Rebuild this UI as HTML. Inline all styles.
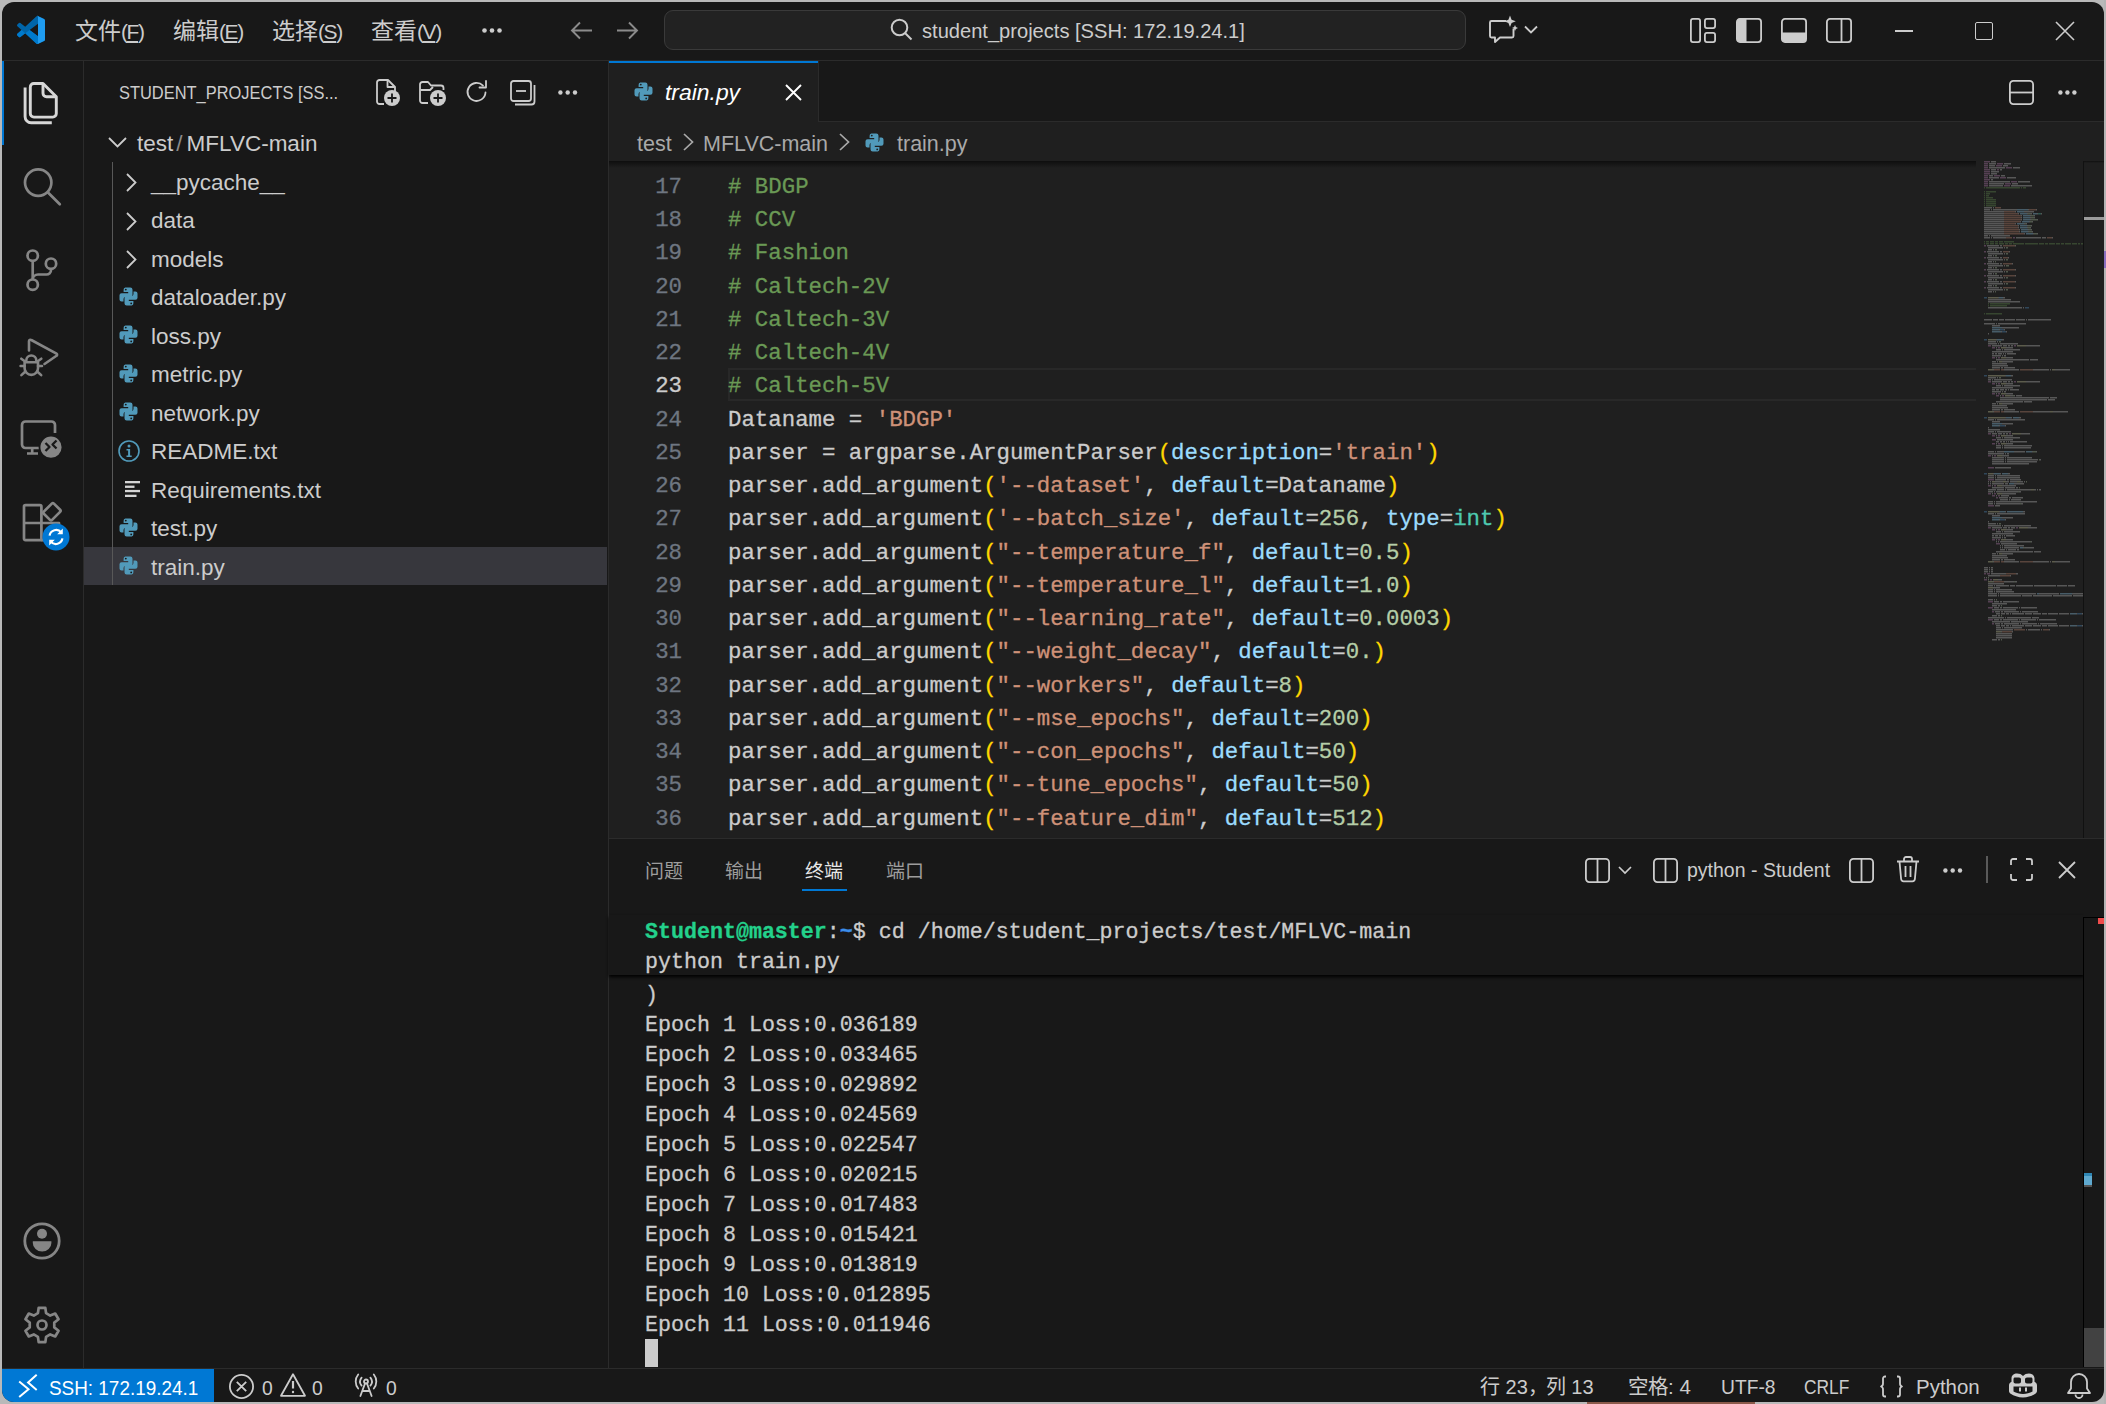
<!DOCTYPE html>
<html lang="zh-CN">
<head>
<meta charset="utf-8">
<style>
html,body{margin:0;padding:0;width:2106px;height:1404px;overflow:hidden;background:#b9b9b9;}
body{font-family:"Liberation Sans",sans-serif;color:#cccccc;position:relative;}
.a{position:absolute;}
#win{position:absolute;left:2px;top:2px;width:2102px;height:1400px;background:#181818;border-radius:12px;overflow:hidden;}
.mono{font-family:"Liberation Mono",monospace;-webkit-text-stroke:0.3px currentColor;}
.ui{font-family:"Liberation Sans",sans-serif;white-space:nowrap;}
svg{position:absolute;overflow:visible;}
.ln{position:absolute;left:0;width:682px;text-align:right;color:#6e7681;}
.cl{position:absolute;left:728px;white-space:pre;color:#cccccc;}
.cm{color:#6a9955}.st{color:#ce9178}.pr{color:#9cdcfe}.nu{color:#b5cea8}.ty{color:#4ec9b0}.br{color:#ffd700}
.tl{position:absolute;left:645px;white-space:pre;color:#cccccc;}
</style>
</head>
<body>
<div id="win"></div>
<!-- coordinates below are page absolute -->
<!-- title bar border -->
<div class="a" style="left:2px;top:60px;width:2102px;height:1px;background:#2b2b2b"></div>
<!-- activity bar border -->
<div class="a" style="left:83px;top:61px;width:1px;height:1307px;background:#2b2b2b"></div>
<!-- activity active indicator -->
<div class="a" style="left:2px;top:61px;width:1.5px;height:84px;background:#0078d4"></div>
<!-- sidebar border -->
<div class="a" style="left:608px;top:61px;width:1px;height:1307px;background:#2b2b2b"></div>
<!-- editor area -->
<div class="a" style="left:609px;top:122px;width:1495px;height:716px;background:#1f1f1f"></div>
<div class="a" style="left:609px;top:161px;width:1367px;height:7px;background:linear-gradient(rgba(0,0,0,0.55),rgba(0,0,0,0))"></div>
<div class="a" style="left:2083px;top:161px;width:21px;height:2px;background:linear-gradient(rgba(0,0,0,0.5),rgba(0,0,0,0))"></div>
<!-- tab bar bottom border -->
<div class="a" style="left:608px;top:121px;width:1496px;height:1px;background:#2b2b2b"></div>
<!-- active tab -->
<div class="a" style="left:609px;top:61px;width:210px;height:61px;background:#1f1f1f;border-right:1px solid #2b2b2b;box-sizing:border-box"></div>
<div class="a" style="left:609px;top:61px;width:209px;height:2px;background:#0078d4"></div>
<!-- panel top border -->
<div class="a" style="left:608px;top:838px;width:1496px;height:1px;background:#2b2b2b"></div>
<!-- status bar -->
<div class="a" style="left:2px;top:1368px;width:2102px;height:1px;background:#2b2b2b"></div>
<div class="a" style="left:2px;top:1369px;width:212px;height:33px;background:#0078d4;border-bottom-left-radius:12px"></div>

<!-- EDITOR CODE -->
<div class="a" style="left:728px;top:368px;width:1248px;height:33px;border:2px solid #282828;border-right:none;box-sizing:border-box"></div>
<div id="code" class="a mono" style="left:0;top:0;width:1983px;height:838px;overflow:hidden;font-size:22.38px;line-height:33.25px;">
<div class="ln" style="top:170.90px;color:#6e7681">17</div><div class="cl" style="top:170.90px"><span class="cm"># BDGP</span></div>
<div class="ln" style="top:204.15px;color:#6e7681">18</div><div class="cl" style="top:204.15px"><span class="cm"># CCV</span></div>
<div class="ln" style="top:237.40px;color:#6e7681">19</div><div class="cl" style="top:237.40px"><span class="cm"># Fashion</span></div>
<div class="ln" style="top:270.65px;color:#6e7681">20</div><div class="cl" style="top:270.65px"><span class="cm"># Caltech-2V</span></div>
<div class="ln" style="top:303.90px;color:#6e7681">21</div><div class="cl" style="top:303.90px"><span class="cm"># Caltech-3V</span></div>
<div class="ln" style="top:337.15px;color:#6e7681">22</div><div class="cl" style="top:337.15px"><span class="cm"># Caltech-4V</span></div>
<div class="ln" style="top:370.40px;color:#cccccc">23</div><div class="cl" style="top:370.40px"><span class="cm"># Caltech-5V</span></div>
<div class="ln" style="top:403.65px;color:#6e7681">24</div><div class="cl" style="top:403.65px">Dataname = <span class="st">'BDGP'</span></div>
<div class="ln" style="top:436.90px;color:#6e7681">25</div><div class="cl" style="top:436.90px">parser = argparse.ArgumentParser<span class="br">(</span><span class="pr">description</span>=<span class="st">'train'</span><span class="br">)</span></div>
<div class="ln" style="top:470.15px;color:#6e7681">26</div><div class="cl" style="top:470.15px">parser.add_argument<span class="br">(</span><span class="st">'--dataset'</span>, <span class="pr">default</span>=Dataname<span class="br">)</span></div>
<div class="ln" style="top:503.40px;color:#6e7681">27</div><div class="cl" style="top:503.40px">parser.add_argument<span class="br">(</span><span class="st">'--batch_size'</span>, <span class="pr">default</span>=<span class="nu">256</span>, <span class="pr">type</span>=<span class="ty">int</span><span class="br">)</span></div>
<div class="ln" style="top:536.65px;color:#6e7681">28</div><div class="cl" style="top:536.65px">parser.add_argument<span class="br">(</span><span class="st">"--temperature_f"</span>, <span class="pr">default</span>=<span class="nu">0.5</span><span class="br">)</span></div>
<div class="ln" style="top:569.90px;color:#6e7681">29</div><div class="cl" style="top:569.90px">parser.add_argument<span class="br">(</span><span class="st">"--temperature_l"</span>, <span class="pr">default</span>=<span class="nu">1.0</span><span class="br">)</span></div>
<div class="ln" style="top:603.15px;color:#6e7681">30</div><div class="cl" style="top:603.15px">parser.add_argument<span class="br">(</span><span class="st">"--learning_rate"</span>, <span class="pr">default</span>=<span class="nu">0.0003</span><span class="br">)</span></div>
<div class="ln" style="top:636.40px;color:#6e7681">31</div><div class="cl" style="top:636.40px">parser.add_argument<span class="br">(</span><span class="st">"--weight_decay"</span>, <span class="pr">default</span>=<span class="nu">0.</span><span class="br">)</span></div>
<div class="ln" style="top:669.65px;color:#6e7681">32</div><div class="cl" style="top:669.65px">parser.add_argument<span class="br">(</span><span class="st">"--workers"</span>, <span class="pr">default</span>=<span class="nu">8</span><span class="br">)</span></div>
<div class="ln" style="top:702.90px;color:#6e7681">33</div><div class="cl" style="top:702.90px">parser.add_argument<span class="br">(</span><span class="st">"--mse_epochs"</span>, <span class="pr">default</span>=<span class="nu">200</span><span class="br">)</span></div>
<div class="ln" style="top:736.15px;color:#6e7681">34</div><div class="cl" style="top:736.15px">parser.add_argument<span class="br">(</span><span class="st">"--con_epochs"</span>, <span class="pr">default</span>=<span class="nu">50</span><span class="br">)</span></div>
<div class="ln" style="top:769.40px;color:#6e7681">35</div><div class="cl" style="top:769.40px">parser.add_argument<span class="br">(</span><span class="st">"--tune_epochs"</span>, <span class="pr">default</span>=<span class="nu">50</span><span class="br">)</span></div>
<div class="ln" style="top:802.65px;color:#6e7681">36</div><div class="cl" style="top:802.65px">parser.add_argument<span class="br">(</span><span class="st">"--feature_dim"</span>, <span class="pr">default</span>=<span class="nu">512</span><span class="br">)</span></div>
</div>
<!-- TERMINAL -->
<div id="term" class="a mono" style="left:0;top:0;width:2084px;height:1367px;overflow:hidden;font-size:21.65px;line-height:30px;">
<div class="tl" style="top:981.2px">)</div>
<div class="tl" style="top:1011.2px">Epoch 1 Loss:0.036189</div>
<div class="tl" style="top:1041.2px">Epoch 2 Loss:0.033465</div>
<div class="tl" style="top:1071.2px">Epoch 3 Loss:0.029892</div>
<div class="tl" style="top:1101.2px">Epoch 4 Loss:0.024569</div>
<div class="tl" style="top:1131.2px">Epoch 5 Loss:0.022547</div>
<div class="tl" style="top:1161.2px">Epoch 6 Loss:0.020215</div>
<div class="tl" style="top:1191.2px">Epoch 7 Loss:0.017483</div>
<div class="tl" style="top:1221.2px">Epoch 8 Loss:0.015421</div>
<div class="tl" style="top:1251.2px">Epoch 9 Loss:0.013819</div>
<div class="tl" style="top:1281.2px">Epoch 10 Loss:0.012895</div>
<div class="tl" style="top:1311.2px">Epoch 11 Loss:0.011946</div>
<div class="a" style="left:645px;top:1339px;width:13px;height:28px;background:#cccccc"></div>
<div class="a" style="left:609px;top:915px;width:1475px;height:60px;background:#181818;box-shadow:0 2px 3px #000"></div>
<div class="tl" style="top:918.2px"><b style="color:#23d18b">Student@master</b>:<b style="color:#3b8eea">~</b>$ cd /home/student_projects/test/MFLVC-main</div>
<div class="tl" style="top:948.2px">python train.py</div>
</div>
<!-- TITLE BAR -->
<svg style="left:17px;top:16px" width="28" height="28" viewBox="0 0 100 100">
<path fill="#0065a9" d="M96.46 10.8 75.86.87a6.23 6.23 0 0 0-7.1 1.2L29.33 38.04 12.15 25.01a4.16 4.16 0 0 0-5.32.24L1.34 30.25a4.17 4.17 0 0 0 0 6.16L16.24 50 1.34 63.6a4.17 4.17 0 0 0 0 6.15l5.5 5a4.16 4.16 0 0 0 5.31.24l17.18-13.04 39.43 35.97a6.23 6.23 0 0 0 7.1 1.2l20.6-9.92a6.25 6.25 0 0 0 3.54-5.63V16.43a6.25 6.25 0 0 0-3.54-5.63ZM75.02 72.7 45.11 50l29.91-22.7v45.4Z"/>
<path fill="#007acc" d="M1.34 63.6 16.24 50l13.09 11.96-17.18 13.04a4.16 4.16 0 0 1-5.31-.24l-5.5-5a4.17 4.17 0 0 1 0-6.15ZM29.33 61.96 45.11 50l29.91 22.7V95.93a6.23 6.23 0 0 1-6.26 2.6Z"/>
<path fill="#1f9cf0" d="M75.86.87 96.46 10.8a6.25 6.25 0 0 1 3.54 5.63v67.14a6.25 6.25 0 0 1-3.54 5.63l-20.6 9.92a6.23 6.23 0 0 1-7.1-1.2c2.3 2.3 6.26.67 6.26-2.6V4.07c0-3.27-3.96-4.9-6.26-2.6a6.23 6.23 0 0 1 7.1-1.2Z"/>
</svg>
<div class="a ui" style="left:75px;top:17px;font-size:23px;line-height:28px;color:#cccccc">文件<span style="font-size:21px;letter-spacing:-1.4px">(<u style="text-underline-offset:2px">F</u>)</span></div>
<div class="a ui" style="left:173px;top:17px;font-size:23px;line-height:28px;color:#cccccc">编辑<span style="font-size:21px;letter-spacing:-1.4px">(<u style="text-underline-offset:2px">E</u>)</span></div>
<div class="a ui" style="left:272px;top:17px;font-size:23px;line-height:28px;color:#cccccc">选择<span style="font-size:21px;letter-spacing:-1.4px">(<u style="text-underline-offset:2px">S</u>)</span></div>
<div class="a ui" style="left:371px;top:17px;font-size:23px;line-height:28px;color:#cccccc">查看<span style="font-size:21px;letter-spacing:-1.4px">(<u style="text-underline-offset:2px">V</u>)</span></div>
<svg style="left:482px;top:28px" width="20" height="5"><circle cx="2.5" cy="2.5" r="2.3" fill="#cccccc"/><circle cx="10" cy="2.5" r="2.3" fill="#cccccc"/><circle cx="17.5" cy="2.5" r="2.3" fill="#cccccc"/></svg>
<!-- nav arrows -->
<svg style="left:570px;top:21px" width="23" height="19" viewBox="0 0 23 19" fill="none" stroke="#8b8b8b" stroke-width="1.9"><path d="M22 9.5H2M10 1.5 2 9.5l8 8"/></svg>
<svg style="left:616px;top:21px" width="23" height="19" viewBox="0 0 23 19" fill="none" stroke="#8b8b8b" stroke-width="1.9"><path d="M1 9.5H21M13 1.5l8 8-8 8"/></svg>
<!-- command center -->
<div class="a" style="left:664px;top:10px;width:802px;height:40px;box-sizing:border-box;border:1.5px solid #3a3a3a;border-radius:9px;background:#222222"></div>
<svg style="left:890px;top:18px" width="23" height="23" viewBox="0 0 23 23" fill="none" stroke="#cccccc" stroke-width="2"><circle cx="9.5" cy="9.5" r="7.8"/><path d="M15 15l6.5 6.5"/></svg>
<div class="a ui" style="left:922px;top:17px;font-size:20.1px;line-height:28px;color:#cccccc">student_projects [SSH: 172.19.24.1]</div>
<!-- copilot -->
<svg style="left:1488px;top:15px" width="30" height="28" viewBox="0 0 30 28" fill="none" stroke="#cccccc" stroke-width="1.9" stroke-linejoin="round"><path d="M18 6H3.5C2.6 6 2 6.6 2 7.5V21c0 .9.6 1.5 1.5 1.5H7V27l5-4.5h12c.9 0 1.5-.6 1.5-1.5V14"/><path fill="#cccccc" stroke="none" d="M22 0.5l1.6 4.2 4.2 1.6-4.2 1.6L22 12.1l-1.6-4.2-4.2-1.6 4.2-1.6z"/><path fill="#cccccc" stroke="none" d="M27 10l.9 2.1 2.1.9-2.1.9-.9 2.1-.9-2.1-2.1-.9 2.1-.9z"/></svg>
<svg style="left:1524px;top:25px" width="14" height="10" viewBox="0 0 14 10" fill="none" stroke="#cccccc" stroke-width="1.8"><path d="M1 1.5l6 6 6-6"/></svg>
<!-- layout icons -->
<svg style="left:1690px;top:18px" width="26" height="25" viewBox="0 0 26 25" fill="none" stroke="#cccccc" stroke-width="1.8"><rect x="0.9" y="0.9" width="9.2" height="23.2" rx="2"/><rect x="14.9" y="0.9" width="10.2" height="9.2" rx="2"/><rect x="14.9" y="14.9" width="10.2" height="9.2" rx="2"/></svg>
<svg style="left:1736px;top:18px" width="26" height="25" viewBox="0 0 26 25" fill="none" stroke="#cccccc" stroke-width="1.8"><rect x="0.9" y="0.9" width="24.2" height="23.2" rx="3"/><path d="M1 4a3 3 0 0 1 3-3h6.5v23H4a3 3 0 0 1-3-3z" fill="#cccccc" stroke="none"/></svg>
<svg style="left:1781px;top:18px" width="26" height="25" viewBox="0 0 26 25" fill="none" stroke="#cccccc" stroke-width="1.8"><rect x="0.9" y="0.9" width="24.2" height="23.2" rx="3"/><path d="M1 14.5h24V21a3 3 0 0 1-3 3H4a3 3 0 0 1-3-3z" fill="#cccccc" stroke="none"/></svg>
<svg style="left:1826px;top:18px" width="26" height="25" viewBox="0 0 26 25" fill="none" stroke="#cccccc" stroke-width="1.8"><rect x="0.9" y="0.9" width="24.2" height="23.2" rx="3"/><path d="M15.5 1v23"/></svg>
<!-- window controls -->
<div class="a" style="left:1895px;top:30px;width:18px;height:2px;background:#cccccc"></div>
<div class="a" style="left:1975px;top:22px;width:18px;height:18px;box-sizing:border-box;border:1.6px solid #cccccc;border-radius:2px"></div>
<svg style="left:2055px;top:21px" width="20" height="20" viewBox="0 0 20 20" stroke="#cccccc" stroke-width="1.6"><path d="M1 1l18 18M19 1 1 19"/></svg>

<!-- SIDEBAR -->
<div class="a ui" style="left:119px;top:80px;font-size:19px;line-height:26px;color:#cccccc;transform-origin:0 0;transform:scaleX(0.865)">STUDENT_PROJECTS [SS...</div>
<svg style="left:376px;top:79px" width="26" height="28" viewBox="0 0 26 28" fill="none" stroke="#cccccc" stroke-width="1.8" stroke-linejoin="round"><path d="M8 25H3.5C2.1 25 1 23.9 1 22.5v-19C1 2.1 2.1 1 3.5 1H12l7 7v4"/><path d="M11.5 1.5V8h7"/><circle cx="16" cy="19" r="8" fill="#cccccc" stroke="none"/><path d="M16 14.5v9M11.5 19h9" stroke="#181818" stroke-width="1.8"/></svg>
<svg style="left:419px;top:81px" width="28" height="26" viewBox="0 0 28 26" fill="none" stroke="#cccccc" stroke-width="1.8" stroke-linejoin="round"><path d="M9 22H3.5C2.1 22 1 20.9 1 19.5v-16C1 2.1 2.1 1 3.5 1H9l3 3.5h10c1.4 0 2.5 1.1 2.5 2.5v2"/><path d="M1.5 9H11l3-3"/><circle cx="19" cy="17" r="8" fill="#cccccc" stroke="none"/><path d="M19 12.5v9M14.5 17h9" stroke="#181818" stroke-width="1.8"/></svg>
<svg style="left:466px;top:80px" width="23" height="24" viewBox="0 0 23 24" fill="none" stroke="#cccccc" stroke-width="1.8" stroke-linecap="round" stroke-linejoin="round"><path d="M19.5 12.5A9 9 0 1 1 17 5.7"/><path d="M20 1v6.5h-6.5"/></svg>
<svg style="left:510px;top:80px" width="26" height="25" viewBox="0 0 26 25" fill="none" stroke="#cccccc" stroke-width="1.8"><rect x="1" y="1" width="20" height="20" rx="2.5"/><path d="M24.5 5v16.5a3 3 0 0 1-3 3H5"/><path d="M6 11h10"/></svg>
<svg style="left:558px;top:89.5px" width="20" height="5"><circle cx="2.4" cy="2.5" r="2.2" fill="#cccccc"/><circle cx="9.7" cy="2.5" r="2.2" fill="#cccccc"/><circle cx="17" cy="2.5" r="2.2" fill="#cccccc"/></svg>
<div class="a" style="left:84px;top:547px;width:523px;height:38px;background:#37373d"></div>
<div class="a" style="left:112px;top:162px;width:1px;height:423px;background:#585858"></div>
<svg style="left:108px;top:137px" width="19" height="11" viewBox="0 0 19 11" fill="none" stroke="#cccccc" stroke-width="1.8"><path d="M1 1l8.5 8.5L18 1"/></svg>
<div class="a ui" style="left:137px;top:125.0px;font-size:22.5px;line-height:38.5px;color:#cccccc">test<span style="color:#8b8b8b;margin:0 4px 0 3px">/</span>MFLVC-main</div>
<svg style="left:126px;top:173.0px" width="11" height="19" viewBox="0 0 11 19" fill="none" stroke="#cccccc" stroke-width="1.8"><path d="M1 1l8.5 8.5L1 18"/></svg>
<div class="a ui" style="left:151px;top:163.5px;font-size:22.5px;line-height:38.5px;color:#cccccc">__pycache__</div>
<svg style="left:126px;top:211.5px" width="11" height="19" viewBox="0 0 11 19" fill="none" stroke="#cccccc" stroke-width="1.8"><path d="M1 1l8.5 8.5L1 18"/></svg>
<div class="a ui" style="left:151px;top:202.0px;font-size:22.5px;line-height:38.5px;color:#cccccc">data</div>
<svg style="left:126px;top:250.0px" width="11" height="19" viewBox="0 0 11 19" fill="none" stroke="#cccccc" stroke-width="1.8"><path d="M1 1l8.5 8.5L1 18"/></svg>
<div class="a ui" style="left:151px;top:240.5px;font-size:22.5px;line-height:38.5px;color:#cccccc">models</div>
<svg style="left:119px;top:286.8px" width="19" height="19" viewBox="0 0 19 19"><path fill="#519aba" d="M6.3 0.5h5a2.2 2.2 0 0 1 2.2 2.2v5.1a2.2 2.2 0 0 1-2.2 2.2H6.6a2.1 2.1 0 0 0-2.1 2.1v2.4H2.6A2.1 2.1 0 0 1 .5 12.4V8.3a2.1 2.1 0 0 1 2.1-2.1h6.6V5H4.6V2.7A2.2 2.2 0 0 1 6.3.5z"/><path fill="#519aba" d="M12.7 18.5h-5a2.2 2.2 0 0 1-2.2-2.2v-5.1a2.2 2.2 0 0 1 2.2-2.2h4.7a2.1 2.1 0 0 0 2.1-2.1V4.5h1.9a2.1 2.1 0 0 1 2.1 2.1v4.1a2.1 2.1 0 0 1-2.1 2.1H9.8V14h4.6v2.3a2.2 2.2 0 0 1-1.7 2.2z"/><circle cx="6.8" cy="2.6" r="0.9" fill="#181818"/><circle cx="12.2" cy="16.4" r="0.9" fill="#181818"/></svg>
<div class="a ui" style="left:151px;top:279.0px;font-size:22.5px;line-height:38.5px;color:#cccccc">dataloader.py</div>
<svg style="left:119px;top:325.3px" width="19" height="19" viewBox="0 0 19 19"><path fill="#519aba" d="M6.3 0.5h5a2.2 2.2 0 0 1 2.2 2.2v5.1a2.2 2.2 0 0 1-2.2 2.2H6.6a2.1 2.1 0 0 0-2.1 2.1v2.4H2.6A2.1 2.1 0 0 1 .5 12.4V8.3a2.1 2.1 0 0 1 2.1-2.1h6.6V5H4.6V2.7A2.2 2.2 0 0 1 6.3.5z"/><path fill="#519aba" d="M12.7 18.5h-5a2.2 2.2 0 0 1-2.2-2.2v-5.1a2.2 2.2 0 0 1 2.2-2.2h4.7a2.1 2.1 0 0 0 2.1-2.1V4.5h1.9a2.1 2.1 0 0 1 2.1 2.1v4.1a2.1 2.1 0 0 1-2.1 2.1H9.8V14h4.6v2.3a2.2 2.2 0 0 1-1.7 2.2z"/><circle cx="6.8" cy="2.6" r="0.9" fill="#181818"/><circle cx="12.2" cy="16.4" r="0.9" fill="#181818"/></svg>
<div class="a ui" style="left:151px;top:317.5px;font-size:22.5px;line-height:38.5px;color:#cccccc">loss.py</div>
<svg style="left:119px;top:363.8px" width="19" height="19" viewBox="0 0 19 19"><path fill="#519aba" d="M6.3 0.5h5a2.2 2.2 0 0 1 2.2 2.2v5.1a2.2 2.2 0 0 1-2.2 2.2H6.6a2.1 2.1 0 0 0-2.1 2.1v2.4H2.6A2.1 2.1 0 0 1 .5 12.4V8.3a2.1 2.1 0 0 1 2.1-2.1h6.6V5H4.6V2.7A2.2 2.2 0 0 1 6.3.5z"/><path fill="#519aba" d="M12.7 18.5h-5a2.2 2.2 0 0 1-2.2-2.2v-5.1a2.2 2.2 0 0 1 2.2-2.2h4.7a2.1 2.1 0 0 0 2.1-2.1V4.5h1.9a2.1 2.1 0 0 1 2.1 2.1v4.1a2.1 2.1 0 0 1-2.1 2.1H9.8V14h4.6v2.3a2.2 2.2 0 0 1-1.7 2.2z"/><circle cx="6.8" cy="2.6" r="0.9" fill="#181818"/><circle cx="12.2" cy="16.4" r="0.9" fill="#181818"/></svg>
<div class="a ui" style="left:151px;top:356.0px;font-size:22.5px;line-height:38.5px;color:#cccccc">metric.py</div>
<svg style="left:119px;top:402.3px" width="19" height="19" viewBox="0 0 19 19"><path fill="#519aba" d="M6.3 0.5h5a2.2 2.2 0 0 1 2.2 2.2v5.1a2.2 2.2 0 0 1-2.2 2.2H6.6a2.1 2.1 0 0 0-2.1 2.1v2.4H2.6A2.1 2.1 0 0 1 .5 12.4V8.3a2.1 2.1 0 0 1 2.1-2.1h6.6V5H4.6V2.7A2.2 2.2 0 0 1 6.3.5z"/><path fill="#519aba" d="M12.7 18.5h-5a2.2 2.2 0 0 1-2.2-2.2v-5.1a2.2 2.2 0 0 1 2.2-2.2h4.7a2.1 2.1 0 0 0 2.1-2.1V4.5h1.9a2.1 2.1 0 0 1 2.1 2.1v4.1a2.1 2.1 0 0 1-2.1 2.1H9.8V14h4.6v2.3a2.2 2.2 0 0 1-1.7 2.2z"/><circle cx="6.8" cy="2.6" r="0.9" fill="#181818"/><circle cx="12.2" cy="16.4" r="0.9" fill="#181818"/></svg>
<div class="a ui" style="left:151px;top:394.5px;font-size:22.5px;line-height:38.5px;color:#cccccc">network.py</div>
<svg style="left:118px;top:439.5px" width="22" height="22" viewBox="0 0 22 22"><circle cx="11" cy="11" r="10" fill="none" stroke="#519aba" stroke-width="1.6"/><circle cx="11" cy="6" r="1.5" fill="#519aba"/><path fill="#519aba" d="M8.5 9h3.6v6.6h1.6v1.4H8.5v-1.4h1.6v-5.2H8.5z"/></svg>
<div class="a ui" style="left:151px;top:433.0px;font-size:22.5px;line-height:38.5px;color:#cccccc">README.txt</div>
<svg style="left:125px;top:481px" width="16" height="16" viewBox="0 0 16 16" fill="#d4d4d4"><rect x="0" y="0" width="15" height="2.3"/><rect x="0" y="4.6" width="9.5" height="2.3"/><rect x="0" y="8.9" width="15" height="2.3"/><rect x="0" y="13.7" width="11.5" height="2.3"/></svg>
<div class="a ui" style="left:151px;top:471.5px;font-size:22.5px;line-height:38.5px;color:#cccccc">Requirements.txt</div>
<svg style="left:119px;top:517.8px" width="19" height="19" viewBox="0 0 19 19"><path fill="#519aba" d="M6.3 0.5h5a2.2 2.2 0 0 1 2.2 2.2v5.1a2.2 2.2 0 0 1-2.2 2.2H6.6a2.1 2.1 0 0 0-2.1 2.1v2.4H2.6A2.1 2.1 0 0 1 .5 12.4V8.3a2.1 2.1 0 0 1 2.1-2.1h6.6V5H4.6V2.7A2.2 2.2 0 0 1 6.3.5z"/><path fill="#519aba" d="M12.7 18.5h-5a2.2 2.2 0 0 1-2.2-2.2v-5.1a2.2 2.2 0 0 1 2.2-2.2h4.7a2.1 2.1 0 0 0 2.1-2.1V4.5h1.9a2.1 2.1 0 0 1 2.1 2.1v4.1a2.1 2.1 0 0 1-2.1 2.1H9.8V14h4.6v2.3a2.2 2.2 0 0 1-1.7 2.2z"/><circle cx="6.8" cy="2.6" r="0.9" fill="#181818"/><circle cx="12.2" cy="16.4" r="0.9" fill="#181818"/></svg>
<div class="a ui" style="left:151px;top:510.0px;font-size:22.5px;line-height:38.5px;color:#cccccc">test.py</div>
<svg style="left:119px;top:556.3px" width="19" height="19" viewBox="0 0 19 19"><path fill="#519aba" d="M6.3 0.5h5a2.2 2.2 0 0 1 2.2 2.2v5.1a2.2 2.2 0 0 1-2.2 2.2H6.6a2.1 2.1 0 0 0-2.1 2.1v2.4H2.6A2.1 2.1 0 0 1 .5 12.4V8.3a2.1 2.1 0 0 1 2.1-2.1h6.6V5H4.6V2.7A2.2 2.2 0 0 1 6.3.5z"/><path fill="#519aba" d="M12.7 18.5h-5a2.2 2.2 0 0 1-2.2-2.2v-5.1a2.2 2.2 0 0 1 2.2-2.2h4.7a2.1 2.1 0 0 0 2.1-2.1V4.5h1.9a2.1 2.1 0 0 1 2.1 2.1v4.1a2.1 2.1 0 0 1-2.1 2.1H9.8V14h4.6v2.3a2.2 2.2 0 0 1-1.7 2.2z"/><circle cx="6.8" cy="2.6" r="0.9" fill="#181818"/><circle cx="12.2" cy="16.4" r="0.9" fill="#181818"/></svg>
<div class="a ui" style="left:151px;top:548.5px;font-size:22.5px;line-height:38.5px;color:#cccccc">train.py</div>
<!-- TABS & BREADCRUMB -->
<svg style="left:634px;top:82px" width="19" height="19" viewBox="0 0 19 19"><path fill="#519aba" d="M6.3 0.5h5a2.2 2.2 0 0 1 2.2 2.2v5.1a2.2 2.2 0 0 1-2.2 2.2H6.6a2.1 2.1 0 0 0-2.1 2.1v2.4H2.6A2.1 2.1 0 0 1 .5 12.4V8.3a2.1 2.1 0 0 1 2.1-2.1h6.6V5H4.6V2.7A2.2 2.2 0 0 1 6.3.5z"/><path fill="#519aba" d="M12.7 18.5h-5a2.2 2.2 0 0 1-2.2-2.2v-5.1a2.2 2.2 0 0 1 2.2-2.2h4.7a2.1 2.1 0 0 0 2.1-2.1V4.5h1.9a2.1 2.1 0 0 1 2.1 2.1v4.1a2.1 2.1 0 0 1-2.1 2.1H9.8V14h4.6v2.3a2.2 2.2 0 0 1-1.7 2.2z"/><circle cx="6.8" cy="2.6" r="0.9" fill="#1f1f1f"/><circle cx="12.2" cy="16.4" r="0.9" fill="#1f1f1f"/></svg>
<div class="a ui" style="left:665px;top:73px;font-size:22.9px;line-height:38px;color:#ffffff;font-style:italic">train.py</div>
<svg style="left:785px;top:84px" width="17" height="17" viewBox="0 0 17 17" stroke="#ffffff" stroke-width="1.9"><path d="M1 1l15 15M16 1 1 16"/></svg>
<svg style="left:2009px;top:79.5px" width="25" height="25" viewBox="0 0 25 25" fill="none" stroke="#cccccc" stroke-width="1.8"><rect x="0.9" y="0.9" width="23.2" height="23.2" rx="3.5"/><path d="M1 12.5h23"/></svg>
<svg style="left:2057.5px;top:89.5px" width="20" height="5"><circle cx="2.4" cy="2.5" r="2.2" fill="#cccccc"/><circle cx="9.4" cy="2.5" r="2.2" fill="#cccccc"/><circle cx="16.4" cy="2.5" r="2.2" fill="#cccccc"/></svg>
<div class="a ui" style="left:637px;top:124.5px;font-size:21.5px;line-height:38px;color:#a9a9a9">test</div>
<svg style="left:683px;top:133px" width="11" height="18" viewBox="0 0 11 18" fill="none" stroke="#a9a9a9" stroke-width="1.7"><path d="M1 1l8.5 8-8.5 8"/></svg>
<div class="a ui" style="left:703px;top:124.5px;font-size:21.5px;line-height:38px;color:#a9a9a9">MFLVC-main</div>
<svg style="left:839px;top:133px" width="11" height="18" viewBox="0 0 11 18" fill="none" stroke="#a9a9a9" stroke-width="1.7"><path d="M1 1l8.5 8-8.5 8"/></svg>
<svg style="left:865px;top:132.5px" width="19" height="19" viewBox="0 0 19 19"><path fill="#519aba" d="M6.3 0.5h5a2.2 2.2 0 0 1 2.2 2.2v5.1a2.2 2.2 0 0 1-2.2 2.2H6.6a2.1 2.1 0 0 0-2.1 2.1v2.4H2.6A2.1 2.1 0 0 1 .5 12.4V8.3a2.1 2.1 0 0 1 2.1-2.1h6.6V5H4.6V2.7A2.2 2.2 0 0 1 6.3.5z"/><path fill="#519aba" d="M12.7 18.5h-5a2.2 2.2 0 0 1-2.2-2.2v-5.1a2.2 2.2 0 0 1 2.2-2.2h4.7a2.1 2.1 0 0 0 2.1-2.1V4.5h1.9a2.1 2.1 0 0 1 2.1 2.1v4.1a2.1 2.1 0 0 1-2.1 2.1H9.8V14h4.6v2.3a2.2 2.2 0 0 1-1.7 2.2z"/><circle cx="6.8" cy="2.6" r="0.9" fill="#1f1f1f"/><circle cx="12.2" cy="16.4" r="0.9" fill="#1f1f1f"/></svg>
<div class="a ui" style="left:897px;top:124.5px;font-size:21.5px;line-height:38px;color:#a9a9a9">train.py</div>
<!-- ACTIVITY BAR -->
<svg style="left:20px;top:78px" width="42" height="50" viewBox="0 0 42 50" fill="none" stroke="#d7d7d7" stroke-width="2.9" stroke-linejoin="round"><path d="M13.8 5.5H23L36.3 18.8V35.6a3.5 3.5 0 0 1-3.5 3.5H13.8a3.5 3.5 0 0 1-3.5-3.5V9a3.5 3.5 0 0 1 3.5-3.5Z"/><path d="M23 5.5v9.8a3.5 3.5 0 0 0 3.5 3.5h9.8"/><path d="M5.1 9.5v29.3a6 6 0 0 0 6 6H31.8"/></svg>
<svg style="left:20px;top:164px" width="44" height="44" viewBox="0 0 44 44" fill="none" stroke="#868686" stroke-width="2.7" stroke-linecap="round"><circle cx="18.2" cy="18.6" r="13.2"/><path d="M28 28.5l11.8 11.8"/></svg>
<svg style="left:20px;top:244px" width="44" height="54" viewBox="0 0 44 54" fill="none" stroke="#868686" stroke-width="2.7"><circle cx="12.7" cy="11.7" r="5.2"/><circle cx="12.7" cy="40.7" r="5.2"/><circle cx="31" cy="19.7" r="5.2"/><path d="M12.7 17v18.4"/><path d="M31 25v1a4.5 4.5 0 0 1-4.5 4.5H18a5.3 5.3 0 0 0-5.3 5"/></svg>
<svg style="left:16px;top:336px" width="46" height="44" viewBox="0 0 46 44" fill="none" stroke="#868686" stroke-width="2.6" stroke-linejoin="round" stroke-linecap="round"><path d="M13 14.5V5.3a1.5 1.5 0 0 1 2.3-1.3L40.5 17.6a1.3 1.3 0 0 1 0 2.2L28.5 28"/><path d="M10.3 24.5a5 5 0 0 1 10 0"/><path d="M8.6 26.2h13.4v6a6.7 6.7 0 0 1-13.4 0z"/><path d="M8.6 30H4.6M22 30h4M9.2 25.5L5.3 22.7M21.4 25.5l3.9-2.8M9.4 35.5l-4 3.6M21.2 35.5l4 3.6"/></svg>
<svg style="left:18px;top:418px" width="50" height="44" viewBox="0 0 50 44" fill="none" stroke="#868686" stroke-width="2.7" stroke-linejoin="round"><path d="M27 30H7.5A3.5 3.5 0 0 1 4 26.5V7A3.5 3.5 0 0 1 7.5 3.5h26A3.5 3.5 0 0 1 37 7v8"/><path d="M14.2 30v5M9 35.5h11"/><circle cx="33" cy="29.2" r="11.5" fill="#868686" stroke="#181818" stroke-width="1.8"/><path d="M27.5 25l4 4-4 4M38.5 22.5l-4 4 4 4" stroke="#181818" stroke-width="2.3"/></svg>
<svg style="left:20px;top:498px" width="46" height="48" viewBox="0 0 46 48" fill="none" stroke="#868686" stroke-width="2.7" stroke-linejoin="round"><path d="M5.5 7.2h14.4a1.5 1.5 0 0 1 1.5 1.5v33.5H5.5a1.5 1.5 0 0 1-1.5-1.5V8.7a1.5 1.5 0 0 1 1.5-1.5z"/><path d="M4 25h35v15.7a1.5 1.5 0 0 1-1.5 1.5H21.4"/><path d="M23.8 13.6l8-8a1.5 1.5 0 0 1 2.1 0l6.2 6.2a1.5 1.5 0 0 1 0 2.1l-8 8a1.5 1.5 0 0 1-2.1 0l-6.2-6.2a1.5 1.5 0 0 1 0-2.1z"/></svg>
<svg style="left:42px;top:523px" width="28" height="28" viewBox="0 0 28 28"><circle cx="14" cy="14" r="13.5" fill="#0078d4"/><path d="M7.6 12.6a6.6 6.6 0 0 1 11.6-3.2M20.4 15.4a6.6 6.6 0 0 1-11.6 3.2" fill="none" stroke="#fff" stroke-width="2.2"/><path d="M20.8 5.6v5.6h-5.6z M7.2 22.4v-5.6h5.6z" fill="#fff"/></svg>
<svg style="left:22px;top:1221px" width="40" height="40" viewBox="0 0 40 40"><circle cx="20" cy="20" r="17.2" fill="none" stroke="#868686" stroke-width="2.8"/><circle cx="20" cy="12.8" r="5" fill="#868686"/><path d="M10.8 20.2h18.6v1.8a9.3 8.6 0 0 1-18.6 0z" fill="#868686"/></svg>
<svg style="left:22px;top:1305px" width="40" height="40" viewBox="0 0 40 40" fill="none" stroke="#868686" stroke-width="2.7" stroke-linejoin="round"><path d="M16.66 2.82 L23.34 2.82 L24.07 8.18 L28.20 10.57 L33.21 8.52 L36.55 14.30 L32.27 17.61 L32.27 22.39 L36.55 25.70 L33.21 31.48 L28.20 29.43 L24.07 31.82 L23.34 37.18 L16.66 37.18 L15.93 31.82 L11.80 29.43 L6.79 31.48 L3.45 25.70 L7.73 22.39 L7.73 17.61 L3.45 14.30 L6.79 8.52 L11.80 10.57 L15.93 8.18Z"/><circle cx="20" cy="20" r="4.5"/></svg>
<!-- PANEL HEADER -->
<div class="a ui" style="left:644.5px;top:857.5px;font-size:19px;line-height:28px;color:#9d9d9d">问题</div>
<div class="a ui" style="left:724.5px;top:857.5px;font-size:19px;line-height:28px;color:#9d9d9d">输出</div>
<div class="a ui" style="left:804.5px;top:857.5px;font-size:19px;line-height:28px;color:#e7e7e7">终端</div>
<div class="a ui" style="left:885.5px;top:857.5px;font-size:19px;line-height:28px;color:#9d9d9d">端口</div>
<div class="a" style="left:802px;top:888.5px;width:45px;height:2px;background:#0078d4"></div>
<svg style="left:1584.5px;top:857.5px" width="26" height="25" viewBox="0 0 26 25" fill="none" stroke="#cccccc" stroke-width="1.8"><rect x="0.9" y="0.9" width="23.2" height="23.2" rx="3.5"/><path d="M12.5 1v23"/></svg>
<svg style="left:1618px;top:866px" width="14" height="9" viewBox="0 0 14 9" fill="none" stroke="#cccccc" stroke-width="1.7"><path d="M1 1l6 6 6-6"/></svg>
<svg style="left:1653px;top:857.5px" width="26" height="25" viewBox="0 0 26 25" fill="none" stroke="#cccccc" stroke-width="1.8"><rect x="0.9" y="0.9" width="23.2" height="23.2" rx="3.5"/><path d="M12.5 1v23"/></svg>
<div class="a ui" style="left:1687px;top:856px;font-size:19.5px;line-height:28px;color:#cccccc">python - Student</div>
<svg style="left:1849px;top:857.5px" width="26" height="25" viewBox="0 0 26 25" fill="none" stroke="#cccccc" stroke-width="1.8"><rect x="0.9" y="0.9" width="23.2" height="23.2" rx="3.5"/><path d="M12.5 1v23"/></svg>
<svg style="left:1896px;top:856px" width="24" height="27" viewBox="0 0 24 27" fill="none" stroke="#cccccc" stroke-width="1.8" stroke-linejoin="round"><path d="M1 5.5h22M8 5.5V3a2 2 0 0 1 2-2h4a2 2 0 0 1 2 2v2.5"/><path d="M3.5 5.5l1.6 17.5a2.5 2.5 0 0 0 2.5 2.3h8.8a2.5 2.5 0 0 0 2.5-2.3L20.5 5.5"/><path d="M9.5 10v11M14.5 10v11"/></svg>
<svg style="left:1943px;top:867.5px" width="20" height="5"><circle cx="2.4" cy="2.5" r="2.2" fill="#cccccc"/><circle cx="9.7" cy="2.5" r="2.2" fill="#cccccc"/><circle cx="17" cy="2.5" r="2.2" fill="#cccccc"/></svg>
<div class="a" style="left:1986px;top:856px;width:2px;height:27px;background:#5a5a5a"></div>
<svg style="left:2010px;top:858px" width="23" height="23" viewBox="0 0 23 23" fill="none" stroke="#cccccc" stroke-width="1.8"><path d="M1 7V3a2 2 0 0 1 2-2h4M16 1h4a2 2 0 0 1 2 2v4M22 16v4a2 2 0 0 1-2 2h-4M7 22H3a2 2 0 0 1-2-2v-4"/></svg>
<svg style="left:2058px;top:860.5px" width="18" height="18" viewBox="0 0 18 18" stroke="#cccccc" stroke-width="1.8"><path d="M1 1l16 16M17 1 1 17"/></svg>
<div class="a" style="left:2083px;top:917px;width:1px;height:450px;background:#000"></div>
<div class="a" style="left:2083px;top:917px;width:21px;height:1px;background:#000"></div>
<div class="a" style="left:2098px;top:918px;width:6px;height:6px;background:#f14c4c"></div>
<div class="a" style="left:2084px;top:1173px;width:8px;height:3px;background:#2f87b5"></div>
<div class="a" style="left:2084px;top:1176px;width:8px;height:9px;background:#5fa9cf"></div>
<div class="a" style="left:2084px;top:1185px;width:8px;height:2px;background:#555"></div>
<div class="a" style="left:2084px;top:1328px;width:20px;height:39px;background:#424242"></div>
<!-- STATUS BAR -->
<svg style="left:17px;top:1373px" width="22" height="26" viewBox="0 0 22 26" fill="none" stroke="#ffffff" stroke-width="2"><path d="M2.2 8.6l9.3 7.7-9.3 7.8M19.7 1.7l-8.6 7.9 8.6 7.4"/></svg>
<div class="a ui" style="left:48.5px;top:1373px;font-size:21px;line-height:30px;color:#ffffff;transform-origin:0 0;transform:scaleX(0.9)">SSH: 172.19.24.1</div>
<svg style="left:228px;top:1373px" width="27" height="27" viewBox="0 0 27 27" fill="none" stroke="#cccccc" stroke-width="1.8"><circle cx="13.5" cy="13.5" r="11.6"/><path d="M8.8 8.8l9.4 9.4M18.2 8.8l-9.4 9.4"/></svg>
<div class="a ui" style="left:261.5px;top:1373px;font-size:21px;line-height:30px;color:#cccccc;transform-origin:0 0;transform:scaleX(0.92)">0</div>
<svg style="left:279px;top:1372px" width="28" height="26" viewBox="0 0 28 26" fill="none" stroke="#cccccc" stroke-width="1.8" stroke-linejoin="round"><path d="M14 2.3L26 23.8H2z"/><path d="M14 9v7.5" stroke-width="2.2"/><circle cx="14" cy="20" r="1.2" fill="#cccccc" stroke="none"/></svg>
<div class="a ui" style="left:312px;top:1373px;font-size:21px;line-height:30px;color:#cccccc;transform-origin:0 0;transform:scaleX(0.92)">0</div>
<svg style="left:353px;top:1372px" width="26" height="26" viewBox="0 0 26 26" fill="none" stroke="#cccccc" stroke-width="1.8" stroke-linecap="round"><path d="M5.2 2.5a11 11 0 0 0 0 14M20.8 2.5a11 11 0 0 1 0 14M8.6 5.6a6.3 6.3 0 0 0 0 8M17.4 5.6a6.3 6.3 0 0 1 0 8"/><circle cx="13" cy="9.5" r="2"/><path d="M12 11.5l-4.6 12.5M14 11.5l4.6 12.5M9.2 19h7.6"/></svg>
<div class="a ui" style="left:385.5px;top:1373px;font-size:21px;line-height:30px;color:#cccccc;transform-origin:0 0;transform:scaleX(0.92)">0</div>
<div class="a ui" style="left:1480px;top:1372px;font-size:20px;line-height:30px;color:#cccccc">行 23<span style="letter-spacing:-2px">，</span>列 13</div>
<div class="a ui" style="left:1628px;top:1372px;font-size:20.5px;line-height:30px;color:#cccccc">空格: 4</div>
<div class="a ui" style="left:1721px;top:1372px;font-size:21px;line-height:30px;color:#cccccc;transform-origin:0 0;transform:scaleX(0.916)">UTF-8</div>
<div class="a ui" style="left:1803.5px;top:1372px;font-size:21px;line-height:30px;color:#cccccc;transform-origin:0 0;transform:scaleX(0.825)">CRLF</div>
<svg style="left:1880px;top:1375px" width="23" height="24" viewBox="0 0 23 24" fill="none" stroke="#cccccc" stroke-width="1.8" stroke-linejoin="round"><path d="M6 1.5H5a2 2 0 0 0-2 2v5a3 3 0 0 1-2 3 3 3 0 0 1 2 3v5a2 2 0 0 0 2 2h1M17 1.5h1a2 2 0 0 1 2 2v5a3 3 0 0 0 2 3 3 3 0 0 0-2 3v5a2 2 0 0 1-2 2h-1"/></svg>
<div class="a ui" style="left:1916px;top:1372px;font-size:21px;line-height:30px;color:#cccccc;transform-origin:0 0;transform:scaleX(0.975)">Python</div>
<svg style="left:2008px;top:1372px" width="30" height="27" viewBox="0 0 30 27"><path fill="#cccccc" d="M9 1.5c-3 0-5.5 1.8-5.5 5v3.3C1.8 10.6 1 12 1 13.5v5.5c0 1.2.7 2.2 1.7 2.8C5.8 23.8 10 25.5 15 25.5s9.2-1.7 12.3-3.7c1-.6 1.7-1.6 1.7-2.8v-5.5c0-1.5-.8-2.9-2.5-3.7V6.5c0-3.2-2.5-5-5.5-5-2.5 0-4.5.8-6 2.5C13.5 2.3 11.5 1.5 9 1.5z"/><path fill="#181818" d="M7 5.5h4c1.2 0 2 .8 2 2v2c0 1.2-.8 2-2 2H7.5c-1.2 0-2-.8-2-2V7c0-.9.6-1.5 1.5-1.5zM19 5.5h4c.9 0 1.5.6 1.5 1.5v2.5c0 1.2-.8 2-2 2H19c-1.2 0-2-.8-2-2v-2c0-1.2.8-2 2-2zM5.5 14.5h19v5c-2.8 1.6-6 2.5-9.5 2.5s-6.7-.9-9.5-2.5z"/><path fill="#cccccc" d="M11 15.5h2v4h-2zM17 15.5h2v4h-2z"/></svg>
<svg style="left:2066px;top:1372px" width="26" height="27" viewBox="0 0 26 27" fill="none" stroke="#cccccc" stroke-width="1.8" stroke-linejoin="round"><path d="M13 2a8 8 0 0 0-8 8v6.5L2 21h22l-3-4.5V10a8 8 0 0 0-8-8z"/><path d="M9.5 22.5a3.5 3.5 0 0 0 7 0"/></svg>
<!-- MINIMAP & SCROLL -->
<div class="a" style="left:2083px;top:161px;width:1px;height:677px;background:#111111"></div>
<div class="a" style="left:2084px;top:217px;width:20px;height:3px;background:#9b9b9b"></div>
<div class="a" style="left:2104px;top:0;width:2px;height:1404px;background:#b4b4b4"></div>
<div class="a" style="left:1587px;top:1402px;width:168px;height:2px;background:#8b5a4a"></div>
<div class="a" style="left:2104px;top:251px;width:2px;height:17px;background:#8a6fc0"></div>
<!--MM-->
<svg style="left:0;top:0" width="2106" height="1404">
<path fill="#c586c0" fill-opacity="0.33" d="M1984 161h6v1.5h-6zM1984 163h4v1.5h-4zM1997 163h6v1.5h-6zM1984 165h4v1.5h-4zM1996 165h6v1.5h-6zM1984 167h4v1.5h-4zM2006 167h6v1.5h-6zM1984 169h6v1.5h-6zM1997 169h2v1.5h-2zM1984 171h6v1.5h-6zM1984 173h6v1.5h-6zM1984 175h4v1.5h-4zM1994 175h6v1.5h-6zM1984 177h4v1.5h-4zM2000 177h6v1.5h-6zM1984 179h6v1.5h-6zM1984 181h4v1.5h-4zM2011 181h6v1.5h-6zM1984 183h4v1.5h-4zM2005 183h6v1.5h-6zM1984 185h4v1.5h-4zM2004 185h6v1.5h-6zM2013 237h2v1.5h-2zM1984 245h2v1.5h-2zM1984 251h2v1.5h-2zM1984 257h2v1.5h-2zM1984 263h2v1.5h-2zM1984 269h2v1.5h-2zM1984 275h2v1.5h-2zM1984 281h2v1.5h-2zM1984 287h2v1.5h-2zM1988 345h3v1.5h-3zM2014 345h2v1.5h-2zM1992 347h3v1.5h-3zM1998 347h2v1.5h-2zM1992 357h3v1.5h-3zM1998 357h2v1.5h-2zM1988 381h3v1.5h-3zM2014 381h2v1.5h-2zM1992 383h3v1.5h-3zM1998 383h2v1.5h-2zM1992 393h3v1.5h-3zM1998 393h2v1.5h-2zM1996 395h3v1.5h-3zM2002 395h2v1.5h-2zM1988 433h3v1.5h-3zM2009 433h2v1.5h-2zM1992 435h3v1.5h-3zM1998 435h2v1.5h-2zM1992 439h4v1.5h-4zM1992 443h3v1.5h-3zM1998 443h2v1.5h-2zM1988 455h3v1.5h-3zM1994 455h2v1.5h-2zM1988 467h6v1.5h-6zM1988 479h6v1.5h-6zM1988 485h3v1.5h-3zM1994 485h2v1.5h-2zM1988 493h3v1.5h-3zM1994 493h2v1.5h-2zM1992 495h3v1.5h-3zM1998 495h2v1.5h-2zM1996 497h2v1.5h-2zM1988 505h6v1.5h-6zM1988 527h3v1.5h-3zM2016 527h2v1.5h-2zM1992 529h3v1.5h-3zM1998 529h2v1.5h-2zM1992 539h3v1.5h-3zM1998 539h2v1.5h-2zM1996 543h4v1.5h-4zM1984 573h2v1.5h-2zM1987 573h3v1.5h-3zM1984 579h3v1.5h-3zM1990 579h2v1.5h-2zM1988 601h5v1.5h-5zM1988 607h5v1.5h-5zM1992 611h2v1.5h-2zM1988 619h5v1.5h-5zM1992 623h2v1.5h-2z"/>
<path fill="#cccccc" fill-opacity="0.33" d="M1991 161h5v1.5h-5zM1989 163h7v1.5h-7zM2004 163h7v1.5h-7zM1989 165h6v1.5h-6zM2003 165h5v1.5h-5zM1989 167h5v1.5h-5zM1994 167h1v1.5h-1zM1995 167h5v1.5h-5zM2000 167h1v1.5h-1zM2001 167h4v1.5h-4zM2013 167h7v1.5h-7zM1991 169h5v1.5h-5zM2000 169h2v1.5h-2zM1991 171h8v1.5h-8zM1991 173h6v1.5h-6zM1989 175h4v1.5h-4zM2001 175h4v1.5h-4zM1989 177h10v1.5h-10zM2007 177h9v1.5h-9zM1991 179h2v1.5h-2zM1989 181h7v1.5h-7zM1996 181h1v1.5h-1zM1997 181h13v1.5h-13zM2018 181h12v1.5h-12zM1989 183h7v1.5h-7zM1996 183h1v1.5h-1zM1997 183h7v1.5h-7zM2012 183h6v1.5h-6zM1989 185h5v1.5h-5zM1994 185h1v1.5h-1zM1995 185h8v1.5h-8zM2011 185h21v1.5h-21zM1984 207h8v1.5h-8zM1993 207h1v1.5h-1zM1984 209h6v1.5h-6zM1991 209h1v1.5h-1zM1993 209h8v1.5h-8zM2001 209h1v1.5h-1zM2002 209h14v1.5h-14zM2016 209h1v1.5h-1zM2028 209h1v1.5h-1zM2036 209h1v1.5h-1zM1984 211h6v1.5h-6zM1990 211h1v1.5h-1zM1991 211h12v1.5h-12zM2003 211h1v1.5h-1zM2015 211h1v1.5h-1zM2024 211h1v1.5h-1zM2025 211h8v1.5h-8zM2033 211h1v1.5h-1zM1984 213h6v1.5h-6zM1990 213h1v1.5h-1zM1991 213h12v1.5h-12zM2003 213h1v1.5h-1zM2018 213h1v1.5h-1zM2027 213h1v1.5h-1zM2031 213h1v1.5h-1zM2037 213h1v1.5h-1zM2041 213h1v1.5h-1zM1984 215h6v1.5h-6zM1990 215h1v1.5h-1zM1991 215h12v1.5h-12zM2003 215h1v1.5h-1zM2021 215h1v1.5h-1zM2030 215h1v1.5h-1zM2034 215h1v1.5h-1zM1984 217h6v1.5h-6zM1990 217h1v1.5h-1zM1991 217h12v1.5h-12zM2003 217h1v1.5h-1zM2021 217h1v1.5h-1zM2030 217h1v1.5h-1zM2034 217h1v1.5h-1zM1984 219h6v1.5h-6zM1990 219h1v1.5h-1zM1991 219h12v1.5h-12zM2003 219h1v1.5h-1zM2021 219h1v1.5h-1zM2030 219h1v1.5h-1zM2037 219h1v1.5h-1zM1984 221h6v1.5h-6zM1990 221h1v1.5h-1zM1991 221h12v1.5h-12zM2003 221h1v1.5h-1zM2020 221h1v1.5h-1zM2029 221h1v1.5h-1zM2032 221h1v1.5h-1zM1984 223h6v1.5h-6zM1990 223h1v1.5h-1zM1991 223h12v1.5h-12zM2003 223h1v1.5h-1zM2015 223h1v1.5h-1zM2024 223h1v1.5h-1zM2026 223h1v1.5h-1zM1984 225h6v1.5h-6zM1990 225h1v1.5h-1zM1991 225h12v1.5h-12zM2003 225h1v1.5h-1zM2018 225h1v1.5h-1zM2027 225h1v1.5h-1zM2031 225h1v1.5h-1zM1984 227h6v1.5h-6zM1990 227h1v1.5h-1zM1991 227h12v1.5h-12zM2003 227h1v1.5h-1zM2018 227h1v1.5h-1zM2027 227h1v1.5h-1zM2030 227h1v1.5h-1zM1984 229h6v1.5h-6zM1990 229h1v1.5h-1zM1991 229h12v1.5h-12zM2003 229h1v1.5h-1zM2019 229h1v1.5h-1zM2028 229h1v1.5h-1zM2031 229h1v1.5h-1zM1984 231h6v1.5h-6zM1990 231h1v1.5h-1zM1991 231h12v1.5h-12zM2003 231h1v1.5h-1zM2019 231h1v1.5h-1zM2028 231h1v1.5h-1zM2032 231h1v1.5h-1zM1984 233h6v1.5h-6zM1990 233h1v1.5h-1zM1991 233h12v1.5h-12zM2003 233h1v1.5h-1zM2024 233h1v1.5h-1zM2033 233h1v1.5h-1zM2037 233h1v1.5h-1zM1984 235h4v1.5h-4zM1989 235h1v1.5h-1zM1991 235h6v1.5h-6zM1997 235h1v1.5h-1zM1998 235h10v1.5h-10zM2008 235h1v1.5h-1zM2009 235h1v1.5h-1zM1984 237h6v1.5h-6zM1991 237h1v1.5h-1zM1993 237h5v1.5h-5zM1998 237h1v1.5h-1zM1999 237h6v1.5h-6zM2005 237h1v1.5h-1zM2016 237h5v1.5h-5zM2021 237h1v1.5h-1zM2022 237h4v1.5h-4zM2026 237h1v1.5h-1zM2027 237h12v1.5h-12zM2039 237h1v1.5h-1zM2040 237h1v1.5h-1zM2042 237h4v1.5h-4zM2052 237h1v1.5h-1zM1987 245h4v1.5h-4zM1991 245h1v1.5h-1zM1992 245h7v1.5h-7zM2000 245h1v1.5h-1zM2001 245h1v1.5h-1zM2015 245h1v1.5h-1zM1988 247h4v1.5h-4zM1992 247h1v1.5h-1zM1993 247h10v1.5h-10zM2004 247h1v1.5h-1zM1988 249h4v1.5h-4zM1993 249h1v1.5h-1zM1987 251h4v1.5h-4zM1991 251h1v1.5h-1zM1992 251h7v1.5h-7zM2000 251h1v1.5h-1zM2001 251h1v1.5h-1zM2009 251h1v1.5h-1zM1988 253h4v1.5h-4zM1992 253h1v1.5h-1zM1993 253h10v1.5h-10zM2004 253h1v1.5h-1zM1988 255h4v1.5h-4zM1993 255h1v1.5h-1zM1987 257h4v1.5h-4zM1991 257h1v1.5h-1zM1992 257h7v1.5h-7zM2000 257h1v1.5h-1zM2001 257h1v1.5h-1zM2008 257h1v1.5h-1zM1988 259h4v1.5h-4zM1992 259h1v1.5h-1zM1993 259h10v1.5h-10zM2004 259h1v1.5h-1zM1988 261h4v1.5h-4zM1993 261h1v1.5h-1zM1987 263h4v1.5h-4zM1991 263h1v1.5h-1zM1992 263h7v1.5h-7zM2000 263h1v1.5h-1zM2001 263h1v1.5h-1zM2012 263h1v1.5h-1zM1988 265h4v1.5h-4zM1992 265h1v1.5h-1zM1993 265h10v1.5h-10zM2004 265h1v1.5h-1zM1988 267h4v1.5h-4zM1993 267h1v1.5h-1zM1987 269h4v1.5h-4zM1991 269h1v1.5h-1zM1992 269h7v1.5h-7zM2000 269h1v1.5h-1zM2001 269h1v1.5h-1zM2015 269h1v1.5h-1zM1988 271h4v1.5h-4zM1992 271h1v1.5h-1zM1993 271h10v1.5h-10zM2004 271h1v1.5h-1zM1988 273h4v1.5h-4zM1993 273h1v1.5h-1zM1987 275h4v1.5h-4zM1991 275h1v1.5h-1zM1992 275h7v1.5h-7zM2000 275h1v1.5h-1zM2001 275h1v1.5h-1zM2015 275h1v1.5h-1zM1988 277h4v1.5h-4zM1992 277h1v1.5h-1zM1993 277h10v1.5h-10zM2004 277h1v1.5h-1zM1988 279h4v1.5h-4zM1993 279h1v1.5h-1zM1987 281h4v1.5h-4zM1991 281h1v1.5h-1zM1992 281h7v1.5h-7zM2000 281h1v1.5h-1zM2001 281h1v1.5h-1zM2015 281h1v1.5h-1zM1988 283h4v1.5h-4zM1992 283h1v1.5h-1zM1993 283h10v1.5h-10zM2004 283h1v1.5h-1zM1988 285h4v1.5h-4zM1993 285h1v1.5h-1zM1987 287h4v1.5h-4zM1991 287h1v1.5h-1zM1992 287h7v1.5h-7zM2000 287h1v1.5h-1zM2001 287h1v1.5h-1zM2015 287h1v1.5h-1zM1988 289h4v1.5h-4zM1992 289h1v1.5h-1zM1993 289h10v1.5h-10zM2004 289h1v1.5h-1zM1988 291h4v1.5h-4zM1993 291h1v1.5h-1zM1998 297h1v1.5h-1zM2003 297h1v1.5h-1zM2004 297h1v1.5h-1zM1988 299h5v1.5h-5zM1993 299h1v1.5h-1zM1994 299h11v1.5h-11zM2005 299h1v1.5h-1zM2006 299h4v1.5h-4zM2010 299h1v1.5h-1zM1988 301h5v1.5h-5zM1993 301h1v1.5h-1zM1994 301h4v1.5h-4zM1998 301h1v1.5h-1zM1999 301h15v1.5h-15zM2014 301h1v1.5h-1zM2015 301h4v1.5h-4zM2019 301h1v1.5h-1zM1988 307h5v1.5h-5zM1993 307h1v1.5h-1zM1994 307h8v1.5h-8zM2002 307h1v1.5h-1zM2003 307h5v1.5h-5zM2008 307h1v1.5h-1zM2009 307h13v1.5h-13zM2023 307h1v1.5h-1zM1984 319h7v1.5h-7zM1991 319h1v1.5h-1zM1993 319h4v1.5h-4zM1997 319h1v1.5h-1zM1999 319h4v1.5h-4zM2003 319h1v1.5h-1zM2005 319h9v1.5h-9zM2014 319h1v1.5h-1zM2016 319h9v1.5h-9zM2026 319h1v1.5h-1zM2028 319h9v1.5h-9zM2037 319h1v1.5h-1zM2038 319h4v1.5h-4zM2042 319h1v1.5h-1zM2043 319h7v1.5h-7zM2050 319h1v1.5h-1zM1984 323h11v1.5h-11zM1996 323h1v1.5h-1zM1998 323h5v1.5h-5zM2003 323h1v1.5h-1zM2004 323h5v1.5h-5zM2009 323h1v1.5h-1zM2010 323h4v1.5h-4zM2014 323h1v1.5h-1zM2015 323h10v1.5h-10zM2025 323h1v1.5h-1zM1992 325h7v1.5h-7zM1999 325h1v1.5h-1zM2002 327h1v1.5h-1zM2003 327h4v1.5h-4zM2007 327h1v1.5h-1zM2008 327h10v1.5h-10zM2018 327h1v1.5h-1zM1999 329h1v1.5h-1zM2004 329h1v1.5h-1zM2001 331h1v1.5h-1zM2006 331h1v1.5h-1zM1988 333h1v1.5h-1zM1996 339h1v1.5h-1zM2002 339h1v1.5h-1zM2003 339h1v1.5h-1zM1988 341h8v1.5h-8zM1997 341h1v1.5h-1zM1988 343h9v1.5h-9zM1998 343h1v1.5h-1zM2000 343h5v1.5h-5zM2005 343h1v1.5h-1zM2006 343h2v1.5h-2zM2008 343h1v1.5h-1zM2009 343h7v1.5h-7zM2016 343h1v1.5h-1zM2017 343h1v1.5h-1zM1992 345h9v1.5h-9zM2001 345h1v1.5h-1zM2003 345h1v1.5h-1zM2004 345h2v1.5h-2zM2006 345h1v1.5h-1zM2008 345h1v1.5h-1zM2009 345h1v1.5h-1zM2011 345h1v1.5h-1zM2012 345h1v1.5h-1zM2026 345h1v1.5h-1zM2027 345h11v1.5h-11zM2038 345h1v1.5h-1zM2039 345h1v1.5h-1zM1996 347h1v1.5h-1zM2006 347h1v1.5h-1zM2007 347h4v1.5h-4zM2011 347h1v1.5h-1zM2012 347h1v1.5h-1zM1996 349h2v1.5h-2zM1998 349h1v1.5h-1zM1999 349h1v1.5h-1zM2000 349h1v1.5h-1zM2002 349h1v1.5h-1zM2004 349h2v1.5h-2zM2006 349h1v1.5h-1zM2007 349h1v1.5h-1zM2008 349h1v1.5h-1zM2009 349h1v1.5h-1zM2010 349h2v1.5h-2zM2012 349h1v1.5h-1zM2013 349h6v1.5h-6zM2019 349h1v1.5h-1zM1992 351h9v1.5h-9zM2001 351h1v1.5h-1zM2002 351h9v1.5h-9zM2011 351h1v1.5h-1zM2012 351h1v1.5h-1zM1992 353h1v1.5h-1zM1993 353h1v1.5h-1zM1995 353h1v1.5h-1zM1996 353h1v1.5h-1zM1998 353h3v1.5h-3zM2001 353h1v1.5h-1zM2003 353h1v1.5h-1zM2005 353h1v1.5h-1zM2007 353h5v1.5h-5zM2012 353h1v1.5h-1zM2013 353h2v1.5h-2zM2015 353h1v1.5h-1zM1992 355h9v1.5h-9zM2002 355h1v1.5h-1zM2004 355h1v1.5h-1zM2005 355h1v1.5h-1zM1996 357h1v1.5h-1zM2006 357h1v1.5h-1zM2007 357h4v1.5h-4zM2011 357h1v1.5h-1zM2012 357h1v1.5h-1zM1996 359h9v1.5h-9zM2005 359h1v1.5h-1zM2006 359h6v1.5h-6zM2012 359h1v1.5h-1zM2013 359h9v1.5h-9zM2022 359h1v1.5h-1zM2023 359h2v1.5h-2zM2025 359h1v1.5h-1zM2026 359h1v1.5h-1zM2027 359h1v1.5h-1zM2028 359h1v1.5h-1zM2030 359h3v1.5h-3zM2033 359h1v1.5h-1zM2034 359h1v1.5h-1zM2035 359h1v1.5h-1zM2036 359h1v1.5h-1zM2037 359h1v1.5h-1zM1992 361h4v1.5h-4zM1997 361h1v1.5h-1zM2002 361h1v1.5h-1zM2003 361h9v1.5h-9zM2012 361h1v1.5h-1zM1992 363h4v1.5h-4zM1996 363h1v1.5h-1zM1997 363h8v1.5h-8zM2005 363h1v1.5h-1zM2006 363h1v1.5h-1zM1992 365h9v1.5h-9zM2001 365h1v1.5h-1zM2002 365h4v1.5h-4zM2006 365h1v1.5h-1zM2007 365h1v1.5h-1zM1992 367h8v1.5h-8zM2001 367h1v1.5h-1zM2002 367h1v1.5h-1zM2004 367h4v1.5h-4zM2008 367h1v1.5h-1zM2009 367h4v1.5h-4zM2013 367h1v1.5h-1zM2014 367h1v1.5h-1zM1993 369h1v1.5h-1zM2004 369h1v1.5h-1zM2005 369h6v1.5h-6zM2011 369h1v1.5h-1zM2012 369h5v1.5h-5zM2017 369h1v1.5h-1zM2018 369h1v1.5h-1zM2033 369h1v1.5h-1zM2034 369h6v1.5h-6zM2040 369h1v1.5h-1zM2041 369h8v1.5h-8zM2050 369h1v1.5h-1zM2055 369h1v1.5h-1zM2056 369h11v1.5h-11zM2067 369h1v1.5h-1zM2068 369h1v1.5h-1zM2069 369h1v1.5h-1zM2005 375h1v1.5h-1zM2011 375h1v1.5h-1zM2012 375h1v1.5h-1zM1988 377h8v1.5h-8zM1997 377h1v1.5h-1zM1988 379h3v1.5h-3zM1992 379h1v1.5h-1zM1994 379h5v1.5h-5zM1999 379h1v1.5h-1zM2000 379h2v1.5h-2zM2002 379h1v1.5h-1zM2003 379h7v1.5h-7zM2010 379h1v1.5h-1zM2011 379h1v1.5h-1zM1992 381h9v1.5h-9zM2001 381h1v1.5h-1zM2003 381h1v1.5h-1zM2004 381h2v1.5h-2zM2006 381h1v1.5h-1zM2008 381h1v1.5h-1zM2009 381h1v1.5h-1zM2011 381h1v1.5h-1zM2012 381h1v1.5h-1zM2026 381h1v1.5h-1zM2027 381h11v1.5h-11zM2038 381h1v1.5h-1zM2039 381h1v1.5h-1zM1996 383h1v1.5h-1zM2006 383h1v1.5h-1zM2007 383h4v1.5h-4zM2011 383h1v1.5h-1zM2012 383h1v1.5h-1zM1996 385h2v1.5h-2zM1998 385h1v1.5h-1zM1999 385h1v1.5h-1zM2000 385h1v1.5h-1zM2002 385h1v1.5h-1zM2004 385h2v1.5h-2zM2006 385h1v1.5h-1zM2007 385h1v1.5h-1zM2008 385h1v1.5h-1zM2009 385h1v1.5h-1zM2010 385h2v1.5h-2zM2012 385h1v1.5h-1zM2013 385h6v1.5h-6zM2019 385h1v1.5h-1zM1992 387h9v1.5h-9zM2001 387h1v1.5h-1zM2002 387h9v1.5h-9zM2011 387h1v1.5h-1zM2012 387h1v1.5h-1zM1992 389h2v1.5h-2zM1994 389h1v1.5h-1zM1996 389h2v1.5h-2zM1998 389h1v1.5h-1zM2000 389h3v1.5h-3zM2003 389h1v1.5h-1zM2005 389h2v1.5h-2zM2008 389h1v1.5h-1zM2010 389h5v1.5h-5zM2015 389h1v1.5h-1zM2016 389h2v1.5h-2zM2018 389h1v1.5h-1zM1992 391h9v1.5h-9zM2002 391h1v1.5h-1zM2004 391h1v1.5h-1zM2005 391h1v1.5h-1zM1996 393h1v1.5h-1zM2006 393h1v1.5h-1zM2007 393h4v1.5h-4zM2011 393h1v1.5h-1zM2012 393h1v1.5h-1zM2000 395h1v1.5h-1zM2010 395h1v1.5h-1zM2011 395h1v1.5h-1zM2012 395h1v1.5h-1zM2014 395h1v1.5h-1zM2016 395h4v1.5h-4zM2020 395h1v1.5h-1zM2021 395h1v1.5h-1zM2000 397h9v1.5h-9zM2009 397h1v1.5h-1zM2010 397h6v1.5h-6zM2016 397h1v1.5h-1zM2017 397h9v1.5h-9zM2026 397h1v1.5h-1zM2027 397h15v1.5h-15zM2042 397h1v1.5h-1zM2043 397h2v1.5h-2zM2045 397h1v1.5h-1zM2046 397h1v1.5h-1zM2047 397h1v1.5h-1zM2048 397h1v1.5h-1zM2050 397h2v1.5h-2zM2052 397h1v1.5h-1zM2053 397h1v1.5h-1zM2054 397h1v1.5h-1zM2055 397h1v1.5h-1zM2056 397h1v1.5h-1zM2000 399h9v1.5h-9zM2009 399h1v1.5h-1zM2010 399h6v1.5h-6zM2016 399h1v1.5h-1zM2017 399h9v1.5h-9zM2026 399h1v1.5h-1zM2027 399h13v1.5h-13zM2040 399h1v1.5h-1zM2041 399h2v1.5h-2zM2043 399h1v1.5h-1zM2044 399h1v1.5h-1zM2045 399h1v1.5h-1zM2046 399h1v1.5h-1zM2048 399h2v1.5h-2zM2050 399h1v1.5h-1zM2051 399h1v1.5h-1zM2052 399h1v1.5h-1zM2053 399h1v1.5h-1zM2054 399h1v1.5h-1zM1996 401h9v1.5h-9zM2005 401h1v1.5h-1zM2006 401h6v1.5h-6zM2012 401h1v1.5h-1zM2013 401h3v1.5h-3zM2016 401h1v1.5h-1zM2017 401h2v1.5h-2zM2019 401h1v1.5h-1zM2020 401h1v1.5h-1zM2021 401h1v1.5h-1zM2022 401h1v1.5h-1zM2024 401h3v1.5h-3zM2027 401h1v1.5h-1zM2028 401h1v1.5h-1zM2029 401h1v1.5h-1zM2030 401h1v1.5h-1zM2031 401h1v1.5h-1zM1992 403h4v1.5h-4zM1997 403h1v1.5h-1zM2002 403h1v1.5h-1zM2003 403h9v1.5h-9zM2012 403h1v1.5h-1zM1992 405h4v1.5h-4zM1996 405h1v1.5h-1zM1997 405h8v1.5h-8zM2005 405h1v1.5h-1zM2006 405h1v1.5h-1zM1992 407h9v1.5h-9zM2001 407h1v1.5h-1zM2002 407h4v1.5h-4zM2006 407h1v1.5h-1zM2007 407h1v1.5h-1zM1992 409h8v1.5h-8zM2001 409h1v1.5h-1zM2002 409h1v1.5h-1zM2004 409h4v1.5h-4zM2008 409h1v1.5h-1zM2009 409h4v1.5h-4zM2013 409h1v1.5h-1zM2014 409h1v1.5h-1zM1993 411h1v1.5h-1zM2004 411h1v1.5h-1zM2005 411h6v1.5h-6zM2011 411h1v1.5h-1zM2012 411h5v1.5h-5zM2017 411h1v1.5h-1zM2018 411h1v1.5h-1zM2033 411h1v1.5h-1zM2034 411h6v1.5h-6zM2040 411h1v1.5h-1zM2041 411h8v1.5h-8zM2049 411h1v1.5h-1zM2053 411h1v1.5h-1zM2054 411h11v1.5h-11zM2065 411h1v1.5h-1zM2066 411h1v1.5h-1zM2067 411h1v1.5h-1zM2005 417h1v1.5h-1zM2011 417h1v1.5h-1zM2019 417h1v1.5h-1zM2020 417h1v1.5h-1zM1988 419h6v1.5h-6zM1995 419h1v1.5h-1zM1997 419h5v1.5h-5zM2002 419h1v1.5h-1zM2003 419h5v1.5h-5zM2008 419h1v1.5h-1zM2009 419h4v1.5h-4zM2013 419h1v1.5h-1zM2014 419h10v1.5h-10zM2024 419h1v1.5h-1zM1992 421h7v1.5h-7zM1999 421h1v1.5h-1zM2002 423h1v1.5h-1zM2003 423h9v1.5h-9zM2012 423h1v1.5h-1zM1999 425h1v1.5h-1zM2005 425h1v1.5h-1zM1988 427h1v1.5h-1zM1988 429h5v1.5h-5zM1993 429h1v1.5h-1zM1994 429h4v1.5h-4zM1998 429h1v1.5h-1zM1999 429h1v1.5h-1zM1988 431h6v1.5h-6zM1995 431h1v1.5h-1zM1997 431h12v1.5h-12zM2009 431h1v1.5h-1zM2010 431h1v1.5h-1zM1992 433h4v1.5h-4zM1996 433h1v1.5h-1zM1998 433h1v1.5h-1zM1999 433h2v1.5h-2zM2001 433h1v1.5h-1zM2003 433h1v1.5h-1zM2004 433h1v1.5h-1zM2006 433h1v1.5h-1zM2007 433h1v1.5h-1zM2021 433h1v1.5h-1zM2022 433h6v1.5h-6zM2028 433h1v1.5h-1zM2029 433h1v1.5h-1zM1996 435h1v1.5h-1zM2006 435h1v1.5h-1zM2007 435h4v1.5h-4zM2011 435h1v1.5h-1zM2012 435h1v1.5h-1zM1996 437h2v1.5h-2zM1998 437h1v1.5h-1zM1999 437h1v1.5h-1zM2000 437h1v1.5h-1zM2002 437h1v1.5h-1zM2004 437h2v1.5h-2zM2006 437h1v1.5h-1zM2007 437h1v1.5h-1zM2008 437h1v1.5h-1zM2009 437h1v1.5h-1zM2010 437h2v1.5h-2zM2012 437h1v1.5h-1zM2013 437h6v1.5h-6zM2019 437h1v1.5h-1zM1997 439h5v1.5h-5zM2002 439h1v1.5h-1zM2003 439h7v1.5h-7zM2010 439h1v1.5h-1zM2011 439h1v1.5h-1zM2012 439h1v1.5h-1zM1996 441h2v1.5h-2zM1998 441h1v1.5h-1zM2000 441h1v1.5h-1zM2001 441h1v1.5h-1zM2003 441h1v1.5h-1zM2004 441h1v1.5h-1zM2006 441h1v1.5h-1zM2008 441h1v1.5h-1zM2010 441h5v1.5h-5zM2015 441h1v1.5h-1zM2016 441h7v1.5h-7zM2023 441h1v1.5h-1zM2024 441h2v1.5h-2zM2026 441h1v1.5h-1zM1996 443h1v1.5h-1zM2006 443h1v1.5h-1zM2007 443h4v1.5h-4zM2011 443h1v1.5h-1zM2012 443h1v1.5h-1zM1996 445h2v1.5h-2zM1998 445h1v1.5h-1zM1999 445h1v1.5h-1zM2000 445h1v1.5h-1zM2002 445h1v1.5h-1zM2004 445h2v1.5h-2zM2006 445h1v1.5h-1zM2007 445h1v1.5h-1zM2008 445h1v1.5h-1zM2009 445h1v1.5h-1zM2010 445h3v1.5h-3zM2013 445h1v1.5h-1zM2014 445h1v1.5h-1zM2015 445h1v1.5h-1zM2016 445h6v1.5h-6zM2022 445h1v1.5h-1zM2023 445h1v1.5h-1zM2024 445h1v1.5h-1zM2025 445h5v1.5h-5zM2030 445h1v1.5h-1zM2031 445h1v1.5h-1zM1996 447h2v1.5h-2zM1998 447h1v1.5h-1zM1999 447h1v1.5h-1zM2000 447h1v1.5h-1zM2002 447h1v1.5h-1zM2004 447h6v1.5h-6zM2010 447h1v1.5h-1zM2011 447h13v1.5h-13zM2024 447h1v1.5h-1zM2025 447h2v1.5h-2zM2027 447h1v1.5h-1zM2028 447h1v1.5h-1zM2029 447h1v1.5h-1zM2030 447h1v1.5h-1zM1988 451h6v1.5h-6zM1995 451h1v1.5h-1zM1997 451h6v1.5h-6zM2003 451h1v1.5h-1zM2014 451h1v1.5h-1zM2015 451h9v1.5h-9zM2024 451h1v1.5h-1zM2032 451h1v1.5h-1zM2036 451h1v1.5h-1zM1988 453h16v1.5h-16zM2005 453h1v1.5h-1zM2007 453h1v1.5h-1zM2008 453h1v1.5h-1zM1992 455h1v1.5h-1zM2002 455h1v1.5h-1zM2003 455h4v1.5h-4zM2007 455h1v1.5h-1zM2008 455h1v1.5h-1zM1992 457h12v1.5h-12zM2005 457h1v1.5h-1zM2007 457h6v1.5h-6zM2013 457h1v1.5h-1zM2014 457h11v1.5h-11zM2025 457h1v1.5h-1zM2026 457h2v1.5h-2zM2028 457h1v1.5h-1zM2029 457h1v1.5h-1zM2030 457h1v1.5h-1zM2031 457h1v1.5h-1zM1992 459h12v1.5h-12zM2005 459h1v1.5h-1zM2007 459h12v1.5h-12zM2019 459h1v1.5h-1zM2020 459h7v1.5h-7zM2027 459h1v1.5h-1zM2028 459h9v1.5h-9zM2037 459h1v1.5h-1zM2040 459h1v1.5h-1zM1992 461h12v1.5h-12zM2005 461h1v1.5h-1zM2007 461h5v1.5h-5zM2012 461h1v1.5h-1zM2013 461h10v1.5h-10zM2023 461h1v1.5h-1zM2024 461h12v1.5h-12zM2036 461h1v1.5h-1zM1992 463h16v1.5h-16zM2008 463h1v1.5h-1zM2009 463h6v1.5h-6zM2015 463h1v1.5h-1zM2016 463h12v1.5h-12zM2028 463h1v1.5h-1zM1995 467h16v1.5h-16zM1993 473h1v1.5h-1zM2000 473h1v1.5h-1zM2008 473h1v1.5h-1zM2009 473h1v1.5h-1zM1988 475h6v1.5h-6zM1995 475h1v1.5h-1zM1997 475h6v1.5h-6zM2003 475h1v1.5h-1zM2004 475h6v1.5h-6zM2010 475h1v1.5h-1zM2011 475h2v1.5h-2zM2013 475h1v1.5h-1zM2014 475h5v1.5h-5zM2019 475h1v1.5h-1zM1988 477h6v1.5h-6zM1995 477h1v1.5h-1zM1997 477h6v1.5h-6zM2003 477h1v1.5h-1zM2004 477h6v1.5h-6zM2010 477h1v1.5h-1zM2011 477h2v1.5h-2zM2013 477h1v1.5h-1zM2014 477h5v1.5h-5zM2019 477h1v1.5h-1zM1995 479h6v1.5h-6zM2001 479h1v1.5h-1zM2002 479h4v1.5h-4zM2007 479h1v1.5h-1zM2008 479h1v1.5h-1zM2010 479h6v1.5h-6zM2016 479h1v1.5h-1zM2017 479h4v1.5h-4zM1988 481h1v1.5h-1zM1990 481h1v1.5h-1zM1995 481h1v1.5h-1zM1996 481h6v1.5h-6zM2002 481h1v1.5h-1zM2006 481h1v1.5h-1zM2007 481h1v1.5h-1zM2008 481h1v1.5h-1zM2010 481h6v1.5h-6zM2016 481h1v1.5h-1zM2020 481h1v1.5h-1zM2021 481h1v1.5h-1zM2022 481h1v1.5h-1zM2024 481h1v1.5h-1zM1988 483h1v1.5h-1zM1990 483h1v1.5h-1zM1992 483h2v1.5h-2zM1994 483h1v1.5h-1zM1995 483h5v1.5h-5zM2000 483h1v1.5h-1zM2001 483h1v1.5h-1zM2002 483h1v1.5h-1zM2003 483h1v1.5h-1zM2005 483h1v1.5h-1zM2006 483h1v1.5h-1zM2007 483h1v1.5h-1zM2014 483h1v1.5h-1zM2015 483h2v1.5h-2zM2017 483h1v1.5h-1zM2018 483h5v1.5h-5zM2023 483h1v1.5h-1zM1992 485h1v1.5h-1zM2002 485h1v1.5h-1zM2003 485h6v1.5h-6zM2009 485h1v1.5h-1zM2010 485h4v1.5h-4zM2014 485h1v1.5h-1zM2015 485h1v1.5h-1zM1992 487h1v1.5h-1zM1993 487h1v1.5h-1zM1994 487h6v1.5h-6zM2000 487h1v1.5h-1zM2001 487h1v1.5h-1zM2002 487h1v1.5h-1zM2003 487h1v1.5h-1zM2005 487h6v1.5h-6zM2011 487h1v1.5h-1zM2012 487h1v1.5h-1zM2013 487h1v1.5h-1zM2014 487h1v1.5h-1zM2016 487h1v1.5h-1zM2017 487h1v1.5h-1zM1988 489h7v1.5h-7zM1995 489h1v1.5h-1zM1997 489h7v1.5h-7zM2005 489h1v1.5h-1zM2007 489h21v1.5h-21zM2028 489h1v1.5h-1zM2029 489h1v1.5h-1zM2030 489h1v1.5h-1zM2034 489h1v1.5h-1zM2035 489h1v1.5h-1zM2037 489h1v1.5h-1zM2039 489h1v1.5h-1zM2040 489h1v1.5h-1zM1988 491h5v1.5h-5zM1994 491h1v1.5h-1zM1996 491h2v1.5h-2zM1998 491h1v1.5h-1zM1999 491h5v1.5h-5zM2004 491h1v1.5h-1zM2005 491h6v1.5h-6zM2011 491h1v1.5h-1zM2012 491h5v1.5h-5zM2017 491h1v1.5h-1zM2019 491h1v1.5h-1zM2020 491h1v1.5h-1zM1992 493h1v1.5h-1zM2002 493h1v1.5h-1zM2003 493h6v1.5h-6zM2009 493h1v1.5h-1zM2010 493h4v1.5h-4zM2014 493h1v1.5h-1zM2015 493h1v1.5h-1zM1996 495h1v1.5h-1zM2001 495h7v1.5h-7zM2008 495h1v1.5h-1zM1999 497h6v1.5h-6zM2005 497h1v1.5h-1zM2006 497h1v1.5h-1zM2007 497h1v1.5h-1zM2009 497h1v1.5h-1zM2010 497h1v1.5h-1zM2012 497h7v1.5h-7zM2019 497h1v1.5h-1zM2020 497h1v1.5h-1zM2021 497h1v1.5h-1zM2022 497h1v1.5h-1zM2000 499h5v1.5h-5zM2005 499h1v1.5h-1zM2006 499h1v1.5h-1zM2007 499h1v1.5h-1zM2009 499h1v1.5h-1zM2011 499h7v1.5h-7zM2018 499h1v1.5h-1zM2019 499h1v1.5h-1zM2020 499h1v1.5h-1zM1988 501h5v1.5h-5zM1994 501h1v1.5h-1zM1996 501h5v1.5h-5zM2001 501h1v1.5h-1zM2002 501h10v1.5h-10zM2012 501h1v1.5h-1zM2013 501h5v1.5h-5zM2018 501h1v1.5h-1zM2019 501h1v1.5h-1zM2020 501h4v1.5h-4zM2024 501h1v1.5h-1zM2025 501h1v1.5h-1zM2026 501h1v1.5h-1zM2027 501h2v1.5h-2zM2029 501h1v1.5h-1zM2030 501h6v1.5h-6zM2036 501h1v1.5h-1zM1988 503h5v1.5h-5zM1994 503h1v1.5h-1zM1996 503h5v1.5h-5zM2001 503h1v1.5h-1zM2002 503h4v1.5h-4zM2006 503h1v1.5h-1zM2007 503h5v1.5h-5zM2012 503h1v1.5h-1zM2013 503h4v1.5h-4zM2017 503h1v1.5h-1zM2018 503h1v1.5h-1zM2019 503h1v1.5h-1zM2021 503h1v1.5h-1zM2022 503h1v1.5h-1zM1995 505h5v1.5h-5zM1999 511h1v1.5h-1zM2005 511h1v1.5h-1zM2023 511h1v1.5h-1zM2024 511h1v1.5h-1zM1988 513h6v1.5h-6zM1995 513h1v1.5h-1zM1997 513h5v1.5h-5zM2002 513h1v1.5h-1zM2003 513h5v1.5h-5zM2008 513h1v1.5h-1zM2009 513h4v1.5h-4zM2013 513h1v1.5h-1zM2014 513h10v1.5h-10zM2024 513h1v1.5h-1zM1992 515h7v1.5h-7zM1999 515h1v1.5h-1zM2002 517h1v1.5h-1zM2003 517h9v1.5h-9zM2012 517h1v1.5h-1zM1999 519h1v1.5h-1zM2005 519h1v1.5h-1zM1988 521h1v1.5h-1zM1988 523h8v1.5h-8zM1997 523h1v1.5h-1zM1988 525h13v1.5h-13zM2002 525h1v1.5h-1zM2004 525h5v1.5h-5zM2009 525h1v1.5h-1zM2010 525h2v1.5h-2zM2012 525h1v1.5h-1zM2013 525h16v1.5h-16zM2029 525h1v1.5h-1zM2030 525h1v1.5h-1zM1992 527h9v1.5h-9zM2001 527h1v1.5h-1zM2003 527h1v1.5h-1zM2004 527h2v1.5h-2zM2006 527h1v1.5h-1zM2008 527h1v1.5h-1zM2009 527h1v1.5h-1zM2011 527h3v1.5h-3zM2014 527h1v1.5h-1zM2028 527h1v1.5h-1zM2029 527h6v1.5h-6zM2035 527h1v1.5h-1zM2036 527h1v1.5h-1zM1996 529h1v1.5h-1zM2006 529h1v1.5h-1zM2007 529h4v1.5h-4zM2011 529h1v1.5h-1zM2012 529h1v1.5h-1zM1996 531h2v1.5h-2zM1998 531h1v1.5h-1zM1999 531h1v1.5h-1zM2000 531h1v1.5h-1zM2002 531h1v1.5h-1zM2004 531h2v1.5h-2zM2006 531h1v1.5h-1zM2007 531h1v1.5h-1zM2008 531h1v1.5h-1zM2009 531h1v1.5h-1zM2010 531h2v1.5h-2zM2012 531h1v1.5h-1zM2013 531h6v1.5h-6zM2019 531h1v1.5h-1zM1992 533h9v1.5h-9zM2001 533h1v1.5h-1zM2002 533h9v1.5h-9zM2011 533h1v1.5h-1zM2012 533h1v1.5h-1zM1992 535h1v1.5h-1zM1993 535h1v1.5h-1zM1995 535h2v1.5h-2zM1997 535h1v1.5h-1zM1999 535h1v1.5h-1zM2000 535h1v1.5h-1zM2002 535h1v1.5h-1zM2004 535h1v1.5h-1zM2006 535h5v1.5h-5zM2011 535h1v1.5h-1zM2012 535h2v1.5h-2zM2014 535h1v1.5h-1zM1992 537h9v1.5h-9zM2002 537h1v1.5h-1zM2004 537h1v1.5h-1zM2005 537h1v1.5h-1zM1996 539h1v1.5h-1zM2006 539h1v1.5h-1zM2007 539h4v1.5h-4zM2011 539h1v1.5h-1zM2012 539h1v1.5h-1zM1996 541h1v1.5h-1zM1998 541h1v1.5h-1zM2000 541h16v1.5h-16zM2016 541h1v1.5h-1zM2017 541h1v1.5h-1zM2018 541h1v1.5h-1zM2019 541h1v1.5h-1zM2020 541h5v1.5h-5zM2025 541h1v1.5h-1zM2026 541h1v1.5h-1zM2027 541h1v1.5h-1zM2028 541h1v1.5h-1zM2029 541h1v1.5h-1zM2031 541h1v1.5h-1zM2001 543h5v1.5h-5zM2006 543h1v1.5h-1zM2007 543h7v1.5h-7zM2014 543h1v1.5h-1zM2015 543h1v1.5h-1zM2016 543h1v1.5h-1zM2000 545h1v1.5h-1zM2002 545h1v1.5h-1zM2004 545h2v1.5h-2zM2006 545h1v1.5h-1zM2007 545h1v1.5h-1zM2008 545h1v1.5h-1zM2009 545h1v1.5h-1zM2010 545h6v1.5h-6zM2016 545h1v1.5h-1zM2017 545h1v1.5h-1zM2018 545h1v1.5h-1zM2019 545h3v1.5h-3zM2022 545h1v1.5h-1zM2023 545h1v1.5h-1zM2000 547h1v1.5h-1zM2002 547h1v1.5h-1zM2004 547h5v1.5h-5zM2009 547h1v1.5h-1zM2010 547h6v1.5h-6zM2016 547h1v1.5h-1zM2017 547h1v1.5h-1zM2018 547h1v1.5h-1zM2023 547h1v1.5h-1zM2025 547h1v1.5h-1zM2026 547h1v1.5h-1zM2027 547h5v1.5h-5zM2032 547h1v1.5h-1zM2033 547h1v1.5h-1zM2000 549h5v1.5h-5zM2006 549h1v1.5h-1zM2008 549h5v1.5h-5zM2013 549h1v1.5h-1zM2014 549h1v1.5h-1zM2015 549h1v1.5h-1zM2017 549h1v1.5h-1zM2018 549h1v1.5h-1zM1996 551h9v1.5h-9zM2005 551h1v1.5h-1zM2006 551h6v1.5h-6zM2012 551h1v1.5h-1zM2013 551h13v1.5h-13zM2026 551h1v1.5h-1zM2027 551h2v1.5h-2zM2029 551h1v1.5h-1zM2030 551h1v1.5h-1zM2031 551h1v1.5h-1zM2032 551h1v1.5h-1zM2034 551h5v1.5h-5zM2039 551h1v1.5h-1zM2040 551h1v1.5h-1zM1992 553h4v1.5h-4zM1997 553h1v1.5h-1zM2002 553h1v1.5h-1zM2003 553h9v1.5h-9zM2012 553h1v1.5h-1zM1992 555h4v1.5h-4zM1996 555h1v1.5h-1zM1997 555h8v1.5h-8zM2005 555h1v1.5h-1zM2006 555h1v1.5h-1zM1992 557h9v1.5h-9zM2001 557h1v1.5h-1zM2002 557h4v1.5h-4zM2006 557h1v1.5h-1zM2007 557h1v1.5h-1zM1992 559h8v1.5h-8zM2001 559h1v1.5h-1zM2002 559h1v1.5h-1zM2004 559h4v1.5h-4zM2008 559h1v1.5h-1zM2009 559h4v1.5h-4zM2013 559h1v1.5h-1zM2014 559h1v1.5h-1zM1993 561h1v1.5h-1zM2004 561h1v1.5h-1zM2005 561h6v1.5h-6zM2011 561h1v1.5h-1zM2012 561h5v1.5h-5zM2017 561h1v1.5h-1zM2018 561h1v1.5h-1zM2033 561h1v1.5h-1zM2034 561h6v1.5h-6zM2040 561h1v1.5h-1zM2041 561h8v1.5h-8zM2050 561h1v1.5h-1zM2055 561h1v1.5h-1zM2056 561h11v1.5h-11zM2067 561h1v1.5h-1zM2068 561h1v1.5h-1zM2069 561h1v1.5h-1zM1984 567h4v1.5h-4zM1989 567h1v1.5h-1zM1991 567h1v1.5h-1zM1992 567h1v1.5h-1zM1984 569h4v1.5h-4zM1989 569h1v1.5h-1zM1991 569h1v1.5h-1zM1992 569h1v1.5h-1zM1984 571h4v1.5h-4zM1989 571h1v1.5h-1zM1991 571h1v1.5h-1zM1992 571h1v1.5h-1zM1991 573h2v1.5h-2zM1993 573h1v1.5h-1zM1994 573h4v1.5h-4zM1998 573h1v1.5h-1zM1999 573h6v1.5h-6zM2005 573h1v1.5h-1zM2016 573h1v1.5h-1zM2017 573h1v1.5h-1zM1988 575h2v1.5h-2zM1990 575h1v1.5h-1zM1991 575h8v1.5h-8zM1999 575h1v1.5h-1zM2010 575h1v1.5h-1zM1984 577h1v1.5h-1zM1986 577h1v1.5h-1zM1988 579h1v1.5h-1zM1998 579h1v1.5h-1zM1999 579h1v1.5h-1zM2000 579h1v1.5h-1zM2001 579h1v1.5h-1zM1993 581h1v1.5h-1zM2004 581h1v1.5h-1zM2005 581h6v1.5h-6zM2011 581h1v1.5h-1zM2012 581h1v1.5h-1zM2013 581h1v1.5h-1zM2015 581h1v1.5h-1zM2016 581h1v1.5h-1zM1988 583h10v1.5h-10zM1998 583h1v1.5h-1zM1999 583h4v1.5h-4zM2003 583h1v1.5h-1zM1988 585h5v1.5h-5zM1994 585h1v1.5h-1zM1996 585h7v1.5h-7zM2003 585h1v1.5h-1zM2004 585h4v1.5h-4zM2008 585h1v1.5h-1zM2010 585h4v1.5h-4zM2014 585h1v1.5h-1zM2016 585h4v1.5h-4zM2020 585h1v1.5h-1zM2021 585h11v1.5h-11zM2032 585h1v1.5h-1zM2034 585h4v1.5h-4zM2038 585h1v1.5h-1zM2039 585h16v1.5h-16zM2055 585h1v1.5h-1zM2057 585h9v1.5h-9zM2066 585h1v1.5h-1zM2068 585h6v1.5h-6zM2074 585h1v1.5h-1zM1993 587h1v1.5h-1zM1994 587h5v1.5h-5zM1999 587h1v1.5h-1zM1988 589h5v1.5h-5zM1994 589h1v1.5h-1zM1996 589h5v1.5h-5zM2001 589h1v1.5h-1zM2002 589h2v1.5h-2zM2004 589h1v1.5h-1zM2005 589h6v1.5h-6zM2011 589h1v1.5h-1zM1988 591h5v1.5h-5zM1994 591h1v1.5h-1zM1996 591h5v1.5h-5zM2001 591h1v1.5h-1zM2002 591h10v1.5h-10zM2012 591h1v1.5h-1zM2013 591h1v1.5h-1zM1988 593h9v1.5h-9zM1998 593h1v1.5h-1zM2000 593h5v1.5h-5zM2005 593h1v1.5h-1zM2006 593h5v1.5h-5zM2011 593h1v1.5h-1zM2012 593h4v1.5h-4zM2016 593h1v1.5h-1zM2017 593h5v1.5h-5zM2022 593h1v1.5h-1zM2023 593h10v1.5h-10zM2033 593h1v1.5h-1zM2034 593h1v1.5h-1zM2035 593h1v1.5h-1zM2039 593h1v1.5h-1zM2040 593h4v1.5h-4zM2044 593h1v1.5h-1zM2045 593h13v1.5h-13zM2058 593h1v1.5h-1zM2072 593h1v1.5h-1zM2073 593h4v1.5h-4zM2077 593h1v1.5h-1zM2078 593h5v1.5h-5zM1988 595h9v1.5h-9zM1998 595h1v1.5h-1zM2000 595h4v1.5h-4zM2004 595h1v1.5h-1zM2005 595h4v1.5h-4zM2009 595h1v1.5h-1zM2010 595h10v1.5h-10zM2020 595h1v1.5h-1zM2022 595h9v1.5h-9zM2031 595h1v1.5h-1zM2033 595h4v1.5h-4zM2037 595h1v1.5h-1zM2038 595h13v1.5h-13zM2051 595h1v1.5h-1zM2053 595h4v1.5h-4zM2057 595h1v1.5h-1zM2058 595h13v1.5h-13zM2071 595h1v1.5h-1zM2073 595h6v1.5h-6zM2079 595h1v1.5h-1zM2080 595h1v1.5h-1zM2081 595h2v1.5h-2zM1988 599h5v1.5h-5zM1994 599h1v1.5h-1zM1994 601h5v1.5h-5zM2000 601h1v1.5h-1zM2001 601h1v1.5h-1zM2003 601h4v1.5h-4zM2007 601h1v1.5h-1zM2008 601h10v1.5h-10zM2018 601h1v1.5h-1zM1992 603h8v1.5h-8zM2000 603h1v1.5h-1zM2001 603h5v1.5h-5zM2006 603h1v1.5h-1zM1992 605h5v1.5h-5zM1998 605h1v1.5h-1zM1999 605h1v1.5h-1zM1994 607h5v1.5h-5zM2000 607h1v1.5h-1zM2001 607h1v1.5h-1zM2003 607h4v1.5h-4zM2007 607h1v1.5h-1zM2008 607h10v1.5h-10zM2019 607h1v1.5h-1zM2021 607h4v1.5h-4zM2025 607h1v1.5h-1zM2026 607h10v1.5h-10zM2036 607h1v1.5h-1zM1992 609h17v1.5h-17zM2009 609h1v1.5h-1zM2010 609h5v1.5h-5zM2015 609h1v1.5h-1zM1995 611h5v1.5h-5zM2001 611h1v1.5h-1zM2002 611h1v1.5h-1zM2004 611h4v1.5h-4zM2008 611h1v1.5h-1zM2009 611h10v1.5h-10zM2020 611h1v1.5h-1zM2022 611h4v1.5h-4zM2026 611h1v1.5h-1zM2027 611h10v1.5h-10zM2037 611h1v1.5h-1zM1996 613h3v1.5h-3zM1999 613h1v1.5h-1zM2001 613h3v1.5h-3zM2004 613h1v1.5h-1zM2006 613h3v1.5h-3zM2010 613h1v1.5h-1zM2012 613h5v1.5h-5zM2017 613h1v1.5h-1zM2018 613h5v1.5h-5zM2023 613h1v1.5h-1zM2025 613h6v1.5h-6zM2031 613h1v1.5h-1zM2033 613h7v1.5h-7zM2040 613h1v1.5h-1zM2042 613h4v1.5h-4zM2046 613h1v1.5h-1zM2048 613h9v1.5h-9zM2057 613h1v1.5h-1zM2059 613h9v1.5h-9zM2068 613h1v1.5h-1zM2076 613h1v1.5h-1zM2082 613h1v1.5h-1zM1992 615h5v1.5h-5zM1998 615h1v1.5h-1zM1999 615h1v1.5h-1zM1988 617h16v1.5h-16zM2005 617h1v1.5h-1zM2007 617h17v1.5h-17zM2024 617h1v1.5h-1zM2025 617h5v1.5h-5zM2030 617h1v1.5h-1zM2032 617h6v1.5h-6zM2038 617h1v1.5h-1zM1994 619h5v1.5h-5zM2000 619h1v1.5h-1zM2001 619h1v1.5h-1zM2003 619h4v1.5h-4zM2007 619h1v1.5h-1zM2008 619h10v1.5h-10zM2019 619h1v1.5h-1zM2021 619h4v1.5h-4zM2025 619h1v1.5h-1zM2026 619h10v1.5h-10zM2037 619h1v1.5h-1zM2039 619h4v1.5h-4zM2043 619h1v1.5h-1zM2044 619h11v1.5h-11zM2055 619h1v1.5h-1zM1992 621h11v1.5h-11zM2003 621h1v1.5h-1zM2004 621h5v1.5h-5zM2009 621h1v1.5h-1zM2011 621h16v1.5h-16zM2027 621h1v1.5h-1zM1995 623h5v1.5h-5zM2001 623h1v1.5h-1zM2002 623h1v1.5h-1zM2004 623h4v1.5h-4zM2008 623h1v1.5h-1zM2009 623h10v1.5h-10zM2020 623h1v1.5h-1zM2022 623h4v1.5h-4zM2026 623h1v1.5h-1zM2027 623h10v1.5h-10zM2038 623h1v1.5h-1zM2040 623h4v1.5h-4zM2044 623h1v1.5h-1zM2045 623h11v1.5h-11zM2056 623h1v1.5h-1zM1996 625h3v1.5h-3zM1999 625h1v1.5h-1zM2001 625h3v1.5h-3zM2004 625h1v1.5h-1zM2006 625h3v1.5h-3zM2010 625h1v1.5h-1zM2012 625h5v1.5h-5zM2017 625h1v1.5h-1zM2018 625h5v1.5h-5zM2023 625h1v1.5h-1zM2025 625h6v1.5h-6zM2031 625h1v1.5h-1zM2033 625h7v1.5h-7zM2040 625h1v1.5h-1zM2042 625h4v1.5h-4zM2046 625h1v1.5h-1zM2048 625h9v1.5h-9zM2057 625h1v1.5h-1zM2059 625h9v1.5h-9zM2068 625h1v1.5h-1zM2076 625h1v1.5h-1zM2082 625h1v1.5h-1zM1996 627h5v1.5h-5zM2002 627h1v1.5h-1zM2004 627h5v1.5h-5zM2009 627h1v1.5h-1zM2010 627h10v1.5h-10zM2020 627h1v1.5h-1zM2021 627h1v1.5h-1zM1996 629h5v1.5h-5zM2001 629h1v1.5h-1zM2002 629h4v1.5h-4zM2006 629h1v1.5h-1zM2007 629h5v1.5h-5zM2012 629h1v1.5h-1zM2026 629h1v1.5h-1zM2028 629h4v1.5h-4zM2032 629h1v1.5h-1zM2033 629h7v1.5h-7zM2041 629h1v1.5h-1zM2049 629h1v1.5h-1zM2001 631h1v1.5h-1zM2012 631h1v1.5h-1zM1996 633h4v1.5h-4zM2000 633h1v1.5h-1zM2001 633h6v1.5h-6zM2007 633h1v1.5h-1zM2008 633h3v1.5h-3zM2011 633h1v1.5h-1zM1996 635h4v1.5h-4zM2000 635h1v1.5h-1zM2001 635h6v1.5h-6zM2007 635h1v1.5h-1zM2008 635h3v1.5h-3zM2011 635h1v1.5h-1zM1996 637h4v1.5h-4zM2000 637h1v1.5h-1zM2001 637h6v1.5h-6zM2007 637h1v1.5h-1zM2008 637h3v1.5h-3zM2011 637h1v1.5h-1zM1992 639h5v1.5h-5zM1998 639h1v1.5h-1zM1999 639h1v1.5h-1z"/>
<path fill="#6a9955" fill-opacity="0.33" d="M1984 187h1v1.5h-1zM1986 187h34v1.5h-34zM2021 187h1v1.5h-1zM2023 187h3v1.5h-3zM1984 191h1v1.5h-1zM1986 191h10v1.5h-10zM1984 193h1v1.5h-1zM1986 193h4v1.5h-4zM1984 195h1v1.5h-1zM1986 195h3v1.5h-3zM1984 197h1v1.5h-1zM1986 197h7v1.5h-7zM1984 199h1v1.5h-1zM1986 199h10v1.5h-10zM1984 201h1v1.5h-1zM1986 201h10v1.5h-10zM1984 203h1v1.5h-1zM1986 203h10v1.5h-10zM1984 205h1v1.5h-1zM1986 205h10v1.5h-10zM1984 241h1v1.5h-1zM1986 241h3v1.5h-3zM1990 241h4v1.5h-4zM1995 241h3v1.5h-3zM1999 241h4v1.5h-4zM2004 241h10v1.5h-10zM1984 243h1v1.5h-1zM1986 243h3v1.5h-3zM1990 243h4v1.5h-4zM1995 243h3v1.5h-3zM1999 243h5v1.5h-5zM2005 243h3v1.5h-3zM2009 243h3v1.5h-3zM2013 243h11v1.5h-11zM2025 243h13v1.5h-13zM2039 243h5v1.5h-5zM2045 243h3v1.5h-3zM2049 243h6v1.5h-6zM2056 243h4v1.5h-4zM2061 243h3v1.5h-3zM2065 243h6v1.5h-6zM2072 243h5v1.5h-5zM2078 243h2v1.5h-2zM2081 243h2v1.5h-2zM1988 303h1v1.5h-1zM1990 303h20v1.5h-20zM1988 305h1v1.5h-1zM1990 305h17v1.5h-17zM1984 313h1v1.5h-1zM1986 313h16v1.5h-16z"/>
<path fill="#ce9178" fill-opacity="0.33" d="M1995 207h6v1.5h-6zM2029 209h7v1.5h-7zM2004 211h11v1.5h-11zM2004 213h14v1.5h-14zM2004 215h17v1.5h-17zM2004 217h17v1.5h-17zM2004 219h17v1.5h-17zM2004 221h16v1.5h-16zM2004 223h11v1.5h-11zM2004 225h14v1.5h-14zM2004 227h14v1.5h-14zM2004 229h15v1.5h-15zM2004 231h15v1.5h-15zM2004 233h20v1.5h-20zM2006 237h6v1.5h-6zM2047 237h5v1.5h-5zM2003 245h12v1.5h-12zM2003 251h6v1.5h-6zM2003 257h5v1.5h-5zM2003 263h9v1.5h-9zM2003 269h12v1.5h-12zM2003 275h12v1.5h-12zM2003 281h12v1.5h-12zM2003 287h12v1.5h-12zM1994 369h6v1.5h-6zM2001 369h3v1.5h-3zM2020 369h13v1.5h-13zM1994 411h6v1.5h-6zM2001 411h3v1.5h-3zM2020 411h13v1.5h-13zM1994 561h6v1.5h-6zM2001 561h3v1.5h-3zM2020 561h13v1.5h-13zM2006 573h10v1.5h-10zM2000 575h10v1.5h-10zM1994 581h10v1.5h-10zM2014 629h11v1.5h-11zM2043 629h6v1.5h-6zM2002 631h10v1.5h-10z"/>
<path fill="#9cdcfe" fill-opacity="0.33" d="M2017 209h11v1.5h-11zM2017 211h7v1.5h-7zM2020 213h7v1.5h-7zM2033 213h4v1.5h-4zM2023 215h7v1.5h-7zM2023 217h7v1.5h-7zM2023 219h7v1.5h-7zM2022 221h7v1.5h-7zM2017 223h7v1.5h-7zM2020 225h7v1.5h-7zM2020 227h7v1.5h-7zM2021 229h7v1.5h-7zM2021 231h7v1.5h-7zM2026 233h7v1.5h-7zM1999 297h4v1.5h-4zM1992 327h10v1.5h-10zM1992 329h7v1.5h-7zM1992 331h9v1.5h-9zM1997 339h5v1.5h-5zM2006 375h5v1.5h-5zM2006 417h5v1.5h-5zM2013 417h6v1.5h-6zM1992 423h10v1.5h-10zM1992 425h7v1.5h-7zM2004 451h10v1.5h-10zM2026 451h6v1.5h-6zM1994 473h6v1.5h-6zM2002 473h6v1.5h-6zM2009 483h5v1.5h-5zM2000 511h5v1.5h-5zM2007 511h16v1.5h-16zM1992 517h10v1.5h-10zM1992 519h7v1.5h-7zM2020 547h3v1.5h-3zM2037 593h2v1.5h-2zM2060 593h12v1.5h-12zM2070 613h6v1.5h-6zM2070 625h6v1.5h-6z"/>
<path fill="#b5cea8" fill-opacity="0.33" d="M2028 213h3v1.5h-3zM2031 215h3v1.5h-3zM2031 217h3v1.5h-3zM2031 219h6v1.5h-6zM2030 221h2v1.5h-2zM2025 223h1v1.5h-1zM2028 225h3v1.5h-3zM2028 227h2v1.5h-2zM2029 229h2v1.5h-2zM2029 231h3v1.5h-3zM2034 233h3v1.5h-3zM2006 247h2v1.5h-2zM1995 249h2v1.5h-2zM2006 253h2v1.5h-2zM1995 255h2v1.5h-2zM2006 259h2v1.5h-2zM1995 261h1v1.5h-1zM2006 265h3v1.5h-3zM1995 267h2v1.5h-2zM2006 271h2v1.5h-2zM1995 273h2v1.5h-2zM2006 277h2v1.5h-2zM1995 279h2v1.5h-2zM2006 283h2v1.5h-2zM1995 285h2v1.5h-2zM2006 289h2v1.5h-2zM1995 291h1v1.5h-1zM1999 341h2v1.5h-2zM1999 377h2v1.5h-2zM2013 395h1v1.5h-1zM2033 451h3v1.5h-3zM2039 459h1v1.5h-1zM2026 481h1v1.5h-1zM2019 487h1v1.5h-1zM2018 491h1v1.5h-1zM2020 503h1v1.5h-1zM1999 523h2v1.5h-2zM2030 541h1v1.5h-1zM2024 547h1v1.5h-1zM1988 577h1v1.5h-1zM2014 581h1v1.5h-1zM1996 599h1v1.5h-1zM2001 605h1v1.5h-1zM2001 615h1v1.5h-1zM2001 639h1v1.5h-1z"/>
<path fill="#4ec9b0" fill-opacity="0.33" d="M2038 213h3v1.5h-3z"/>
<path fill="#569cd6" fill-opacity="0.33" d="M1984 297h3v1.5h-3zM2025 307h4v1.5h-4zM2000 329h4v1.5h-4zM2002 331h4v1.5h-4zM1984 339h3v1.5h-3zM1984 375h3v1.5h-3zM1984 417h3v1.5h-3zM2000 425h5v1.5h-5zM1984 473h3v1.5h-3zM1984 511h3v1.5h-3zM2000 519h5v1.5h-5zM2077 613h5v1.5h-5zM2077 625h5v1.5h-5z"/>
<path fill="#dcdcaa" fill-opacity="0.33" d="M1988 297h10v1.5h-10zM1988 339h8v1.5h-8zM2017 345h9v1.5h-9zM2001 347h5v1.5h-5zM2001 357h5v1.5h-5zM1999 361h3v1.5h-3zM1988 369h5v1.5h-5zM2052 369h3v1.5h-3zM1988 375h17v1.5h-17zM2017 381h9v1.5h-9zM2001 383h5v1.5h-5zM2001 393h5v1.5h-5zM2005 395h5v1.5h-5zM1999 403h3v1.5h-3zM1988 411h5v1.5h-5zM2050 411h3v1.5h-3zM1988 417h17v1.5h-17zM2012 433h9v1.5h-9zM2001 435h5v1.5h-5zM2001 443h5v1.5h-5zM1997 455h5v1.5h-5zM1988 473h5v1.5h-5zM1992 481h3v1.5h-3zM2003 481h3v1.5h-3zM2017 481h3v1.5h-3zM1997 485h5v1.5h-5zM2031 489h3v1.5h-3zM1997 493h5v1.5h-5zM1988 511h11v1.5h-11zM2019 527h9v1.5h-9zM2001 529h5v1.5h-5zM2001 539h5v1.5h-5zM1999 553h3v1.5h-3zM1988 561h5v1.5h-5zM2052 561h3v1.5h-3zM1993 579h5v1.5h-5zM1988 581h5v1.5h-5zM1988 587h5v1.5h-5zM1996 631h5v1.5h-5z"/>
</svg>
<!--/MM-->
</body>
</html>
